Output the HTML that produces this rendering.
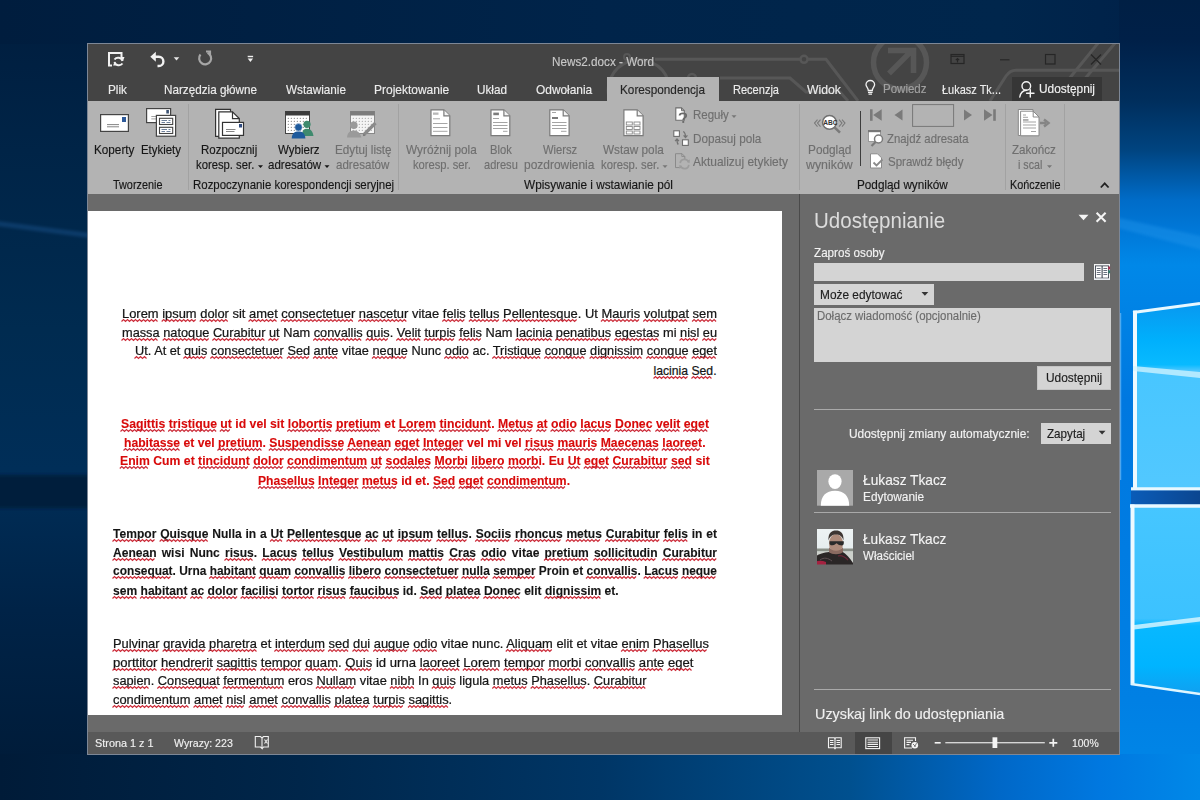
<!DOCTYPE html>
<html><head><meta charset="utf-8"><style>*{margin:0;padding:0;box-sizing:border-box}
html,body{width:1200px;height:800px;overflow:hidden;background:#0a3a78;font-family:"Liberation Sans",sans-serif}
.a{position:absolute}
.t{position:absolute;white-space:pre;line-height:1;transform-origin:0 0;font-family:"Liberation Sans",sans-serif}
#win{position:absolute;left:87px;top:43px;width:1033px;height:712px;background:#6a6a6a;border:1px solid #7d8796}
#title{position:absolute;left:88px;top:44px;width:1031px;height:57px;background:#444444;overflow:hidden}
#ribbon{position:absolute;left:88px;top:101px;width:1031px;height:93px;background:#b3b3b3}
#doc{position:absolute;left:88px;top:194px;width:711px;height:538px;background:#6a6a6a}
#page{position:absolute;left:88px;top:211px;width:694px;height:504px;background:#fff}
#pane{position:absolute;left:799px;top:194px;width:320px;height:538px;background:#6a6a6a;border-left:1px solid #4a4a4a}
#status{position:absolute;left:88px;top:732px;width:1031px;height:22px;background:#595959}
.sep{position:absolute;width:1px;background:#a0a0a0}
.dl{position:absolute;white-space:pre;line-height:1;transform-origin:0 0;font-family:"Liberation Sans",sans-serif;font-size:12px;color:#1a1a1a}
.u{}
</style></head><body>
<svg class="a" style="left:0;top:0" width="1200" height="800" viewBox="0 0 1200 800">
<defs>
<filter id="bl" x="-20%" y="-50%" width="140%" height="200%"><feGaussianBlur stdDeviation="1.6"/></filter>
<linearGradient id="leftG" x1="0" y1="0" x2="0" y2="800" gradientUnits="userSpaceOnUse">
<stop offset="0.0000" stop-color="#001d3e"/><stop offset="0.1875" stop-color="#002447"/><stop offset="0.4125" stop-color="#002b50"/>
<stop offset="0.5875" stop-color="#002e58"/><stop offset="0.7625" stop-color="#002347"/><stop offset="1.0000" stop-color="#001a36"/>
</linearGradient>
<linearGradient id="topG" x1="0" y1="0" x2="1200" y2="0" gradientUnits="userSpaceOnUse">
<stop offset="0.0000" stop-color="#001d3e"/><stop offset="0.5000" stop-color="#00244a"/><stop offset="0.8333" stop-color="#00264c"/><stop offset="1.0000" stop-color="#002048"/>
</linearGradient>
<linearGradient id="botG" x1="0" y1="0" x2="1200" y2="0" gradientUnits="userSpaceOnUse">
<stop offset="0.0000" stop-color="#001b38"/><stop offset="0.2500" stop-color="#00264a"/><stop offset="0.5000" stop-color="#003666"/><stop offset="0.7083" stop-color="#00508f"/>
<stop offset="0.8333" stop-color="#0068c8"/><stop offset="0.9167" stop-color="#0078e0"/><stop offset="1.0000" stop-color="#0088e8"/>
</linearGradient>
<linearGradient id="rightG" x1="0" y1="0" x2="0" y2="800" gradientUnits="userSpaceOnUse">
<stop offset="0.0000" stop-color="#001f44"/><stop offset="0.0500" stop-color="#002048"/><stop offset="0.1250" stop-color="#002e5c"/><stop offset="0.1875" stop-color="#004480"/>
<stop offset="0.2500" stop-color="#006cc8"/><stop offset="0.2875" stop-color="#0078d8"/><stop offset="0.3312" stop-color="#0088e8"/><stop offset="0.5000" stop-color="#0078e0"/>
<stop offset="0.8750" stop-color="#0080e4"/><stop offset="1.0000" stop-color="#0088e8"/>
</linearGradient>
<linearGradient id="pane1" x1="0" y1="303" x2="0" y2="490" gradientUnits="userSpaceOnUse">
<stop offset="0" stop-color="#0898f0"/><stop offset="0.2" stop-color="#00b0fc"/><stop offset="0.33" stop-color="#08baff"/><stop offset="0.36" stop-color="#48c6ff"/><stop offset="1" stop-color="#52c8ff"/>
</linearGradient>
<linearGradient id="pane2" x1="0" y1="505" x2="0" y2="694" gradientUnits="userSpaceOnUse">
<stop offset="0" stop-color="#46c6ff"/><stop offset="0.6" stop-color="#3cc2ff"/><stop offset="0.64" stop-color="#08b8ff"/><stop offset="0.85" stop-color="#00b4ff"/><stop offset="1" stop-color="#10a0f0"/>
</linearGradient>
<linearGradient id="gap" x1="0" y1="0" x2="1" y2="0"><stop offset="0" stop-color="#0a5cb8"/><stop offset="1" stop-color="#0a4690"/></linearGradient>
</defs>
<rect x="0" y="0" width="1200" height="800" fill="url(#leftG)"/>
<rect x="0" y="0" width="1200" height="44" fill="url(#topG)"/>
<rect x="0" y="754" width="1200" height="46" fill="url(#botG)"/>
<path d="M-10 220 L98 234 L98 239 L-10 225 Z" fill="#2a6ab0" opacity=".3" filter="url(#bl)"/>
<rect x="-10" y="475" width="108" height="33" fill="#001a38" opacity=".85" filter="url(#bl)"/>
<rect x="1119" y="0" width="81" height="754" fill="url(#rightG)"/>
<path d="M1110 216 L1210 238 V252 L1110 226 Z" fill="#2a9cf0" opacity=".35" filter="url(#bl)"/>
<path d="M1133 312 L1200 303 V489 H1133 Z" fill="url(#pane1)"/>
<path d="M1133 312.5 L1200 303.5" stroke="#e8f8ff" stroke-width="3"/><path d="M1120.7 313 V480" stroke="#bfe6ff" stroke-width="1" opacity=".5"/>
<path d="M1135 310.5 V490" stroke="#eefaff" stroke-width="4"/>
<path d="M1131 489 H1200" stroke="#e8f8ff" stroke-width="3.5"/>
<rect x="1131" y="490.5" width="69" height="14" fill="url(#gap)"/>
<path d="M1131 505 H1200 V694 L1131 684 Z" fill="url(#pane2)"/>
<path d="M1130 506 H1200" stroke="#e8f8ff" stroke-width="3.5"/>
<path d="M1132.5 504.5 V685" stroke="#eefaff" stroke-width="4"/>
<path d="M1131 684 L1200 694" stroke="#e0f6ff" stroke-width="2.5"/>
<path d="M1133 366 L1200 372 V378 L1133 371 Z" fill="#d4f4ff" opacity=".75"/>
<path d="M1134 625 L1200 617 V621.5 L1134 629.5 Z" fill="#e0f8ff" opacity=".8"/>
</svg>
<div id="win"></div><div id="title"></div>
<svg class="a" style="left:88px;top:44px" width="1031" height="57" viewBox="88 44 1031 57">
<g fill="none" stroke="#575757" stroke-width="3">
<path d="M655 59.3 H800.5 M807.5 59.3 H826 L858 101"/>
<circle cx="804" cy="59.3" r="3.5" stroke-width="2.5"/>
<path d="M610 101 A24 24 0 0 1 668 80" stroke-width="3"/>
<path d="M720 78 H790 L806 92 H840 L848 101" stroke-width="3"/>
<circle cx="900" cy="62.5" r="26.5" stroke-width="5.5"/>
<path d="M889 73.5 L911 51.5 M888 50.5 H913.5 V73" stroke-width="5.5"/>
<path d="M1120 70.2 H1016 Q1010 70.2 1006 76 L990 101"/>
<path d="M1060 90 L1099 42 M1072 94 L1116 42" stroke-width="3"/>
<circle cx="627" cy="57" r="3" stroke-width="2"/>
<circle cx="692" cy="78" r="4" stroke-width="2.5"/>
</g>
</svg>
<div class="a" style="left:607px;top:77px;width:112px;height:24px;background:#b3b3b3"></div>
<div class="a" style="left:1012px;top:77px;width:90px;height:24px;background:#363636"></div>
<svg class="a" style="left:100px;top:46px" width="160" height="26" viewBox="100 46 160 26">
<g fill="none" stroke="#f2f2f2" stroke-width="2">
<path d="M112 65.5 H109 V53 H121.5 V58"/>
<path d="M114.5 59.5 A4.6 4.6 0 0 1 122.5 61 M122.5 63.5 A4.6 4.6 0 0 1 114.5 62"/>
</g>
<path d="M121 57 L124.5 57 L123 61 Z" fill="#f2f2f2"/>
<path d="M113 61.5 L116.5 61.5 L115 65.5 Z" fill="#f2f2f2" transform="rotate(180 114.8 63.5)"/>
<path d="M153.5 56.8 H158.8 A4.6 4.6 0 0 1 158.8 66 H157.5" fill="none" stroke="#f2f2f2" stroke-width="2.4"/>
<path d="M150.3 56.8 L155.8 51.8 V61.8 Z" fill="#f2f2f2"/>
<path d="M173.7 57.2 H179.3 L176.5 60.4 Z" fill="#e6e6e6"/>
<g fill="none" stroke="#a6a6a6" stroke-width="2.2">
<path d="M207.5 52.8 A6 6 0 1 1 200.5 54.5"/>
<path d="M206 51.5 H210 V55.5"/>
</g>
<rect x="247.7" y="55.8" width="5.4" height="1.4" fill="#f0f0f0"/>
<path d="M247.7 58.6 H253.1 L250.4 62 Z" fill="#f0f0f0"/>
</svg>
<svg class="a" style="left:940px;top:44px" width="180" height="32" viewBox="940 44 180 32">
<g fill="none" stroke="#262626" stroke-width="1.2">
<rect x="951" y="54.5" width="13" height="9"/>
<path d="M951 56.3 H964"/>
<path d="M957.5 62.5 V58.5 M955.8 60.2 L957.5 58.5 L959.2 60.2"/>
<path d="M1000 59.8 H1009.5"/>
<rect x="1045.5" y="54.5" width="9.5" height="9.5"/>
<path d="M1091 54.5 L1101 64.5 M1101 54.5 L1091 64.5"/>
</g>
</svg>
<svg class="a" style="left:860px;top:76px" width="250" height="25" viewBox="860 76 250 25">
<g fill="none" stroke="#f0f0f0" stroke-width="1.3">
<path d="M868.3 90.5 C868.3 88 866 86.5 866 84.8 A4.3 4.3 0 0 1 874.6 84.8 C874.6 86.5 872.3 88 872.3 90.5 Z"/>
<path d="M868 92.3 H872.6 M868.5 94.2 H872"/>
</g>
<g fill="none" stroke="#f4f4f4" stroke-width="1.4" stroke-linecap="round">
<circle cx="1026.3" cy="86" r="4.3"/>
<path d="M1019.8 97 C1020.5 93 1023 90.5 1026.5 90.3"/>
<path d="M1030.3 89.6 V97 M1026.6 93.3 H1034"/>
</g>
</svg>
<div id="ribbon"></div>
<div class="sep" style="left:188.0px;top:104px;height:86px;background:#a2a2a2"></div>
<div class="sep" style="left:398.0px;top:104px;height:86px;background:#a2a2a2"></div>
<div class="sep" style="left:798.5px;top:104px;height:86px;background:#a2a2a2"></div>
<div class="sep" style="left:1005.0px;top:104px;height:86px;background:#a2a2a2"></div>
<div class="sep" style="left:1064.0px;top:104px;height:86px;background:#a2a2a2"></div>
<div class="a" style="left:860px;top:111px;width:1px;height:55px;background:#3c3c3c"></div>
<svg class="a" style="left:88px;top:101px" width="1031" height="93" viewBox="88 101 1031 93"><rect x="100.6" y="114.6" width="27.8" height="16.8" fill="#fff" stroke="#444" stroke-width="1.2"/><rect x="122" y="117" width="4" height="5" fill="#2e5a9a"/><path d="M107 124.6 H119 M107 126.8 H119" stroke="#777" stroke-width="0.9"/><rect x="146.6" y="108.6" width="24" height="14" fill="#fff" stroke="#444" stroke-width="1.2"/><rect x="166.3" y="110" width="2.6" height="3.5" fill="#3a5070"/><path d="M151.3 116.5 H156.5 M151.3 118.9 H156.5" stroke="#8a8a8a" stroke-width="0.8"/><rect x="156.4" y="115.4" width="19.2" height="20.8" fill="#fff" stroke="#444" stroke-width="1.2"/><rect x="159.5" y="118.3" width="13.2" height="6.2" fill="#fff" stroke="#444" stroke-width="1.1"/><rect x="159.5" y="127.3" width="13.2" height="6.2" fill="#fff" stroke="#444" stroke-width="1.1"/><path d="M161.5 120.5 H167 M168.5 120.5 H170.5 M161.5 122.5 H165 M166.5 122.5 H170.5 M161.5 129.5 H167 M168.5 129.5 H170.5 M161.5 131.5 H165 M166.5 131.5 H170.5" stroke="#4a6080" stroke-width="0.8"/><path d="M215.6 109.4 H230.5 V136.4 H215.6 Z" fill="#fff" stroke="#333" stroke-width="1.2"/><path d="M218.8 111.8 H232.5 L239.3 118.6 V138.2 H218.8 Z" fill="#fff" stroke="#333" stroke-width="1.2"/><path d="M232.5 111.8 V118.6 H239.3" fill="none" stroke="#333" stroke-width="1.2"/><rect x="222.5" y="122.4" width="21" height="13" fill="#fff" stroke="#333" stroke-width="1.2"/><rect x="239" y="124" width="3" height="3.5" fill="#2e4a80"/><path d="M226 129.5 H235.5 M226 131.5 H234.5" stroke="#666" stroke-width="0.8"/><rect x="285.5" y="111.5" width="24" height="22" fill="#fff" stroke="#444" stroke-width="1"/><rect x="285.2" y="111.2" width="24.6" height="4.3" fill="#3c3c3c"/><circle cx="288.3" cy="118.3" r="0.55" fill="#555"/><circle cx="288.3" cy="121.3" r="0.55" fill="#555"/><circle cx="288.3" cy="124.3" r="0.55" fill="#555"/><circle cx="288.3" cy="127.3" r="0.55" fill="#555"/><circle cx="288.3" cy="130.3" r="0.55" fill="#555"/><circle cx="291.3" cy="118.3" r="0.55" fill="#555"/><circle cx="291.3" cy="121.3" r="0.55" fill="#555"/><circle cx="291.3" cy="124.3" r="0.55" fill="#555"/><circle cx="291.3" cy="127.3" r="0.55" fill="#555"/><circle cx="291.3" cy="130.3" r="0.55" fill="#555"/><circle cx="294.3" cy="118.3" r="0.55" fill="#555"/><circle cx="294.3" cy="121.3" r="0.55" fill="#555"/><circle cx="294.3" cy="124.3" r="0.55" fill="#555"/><circle cx="294.3" cy="127.3" r="0.55" fill="#555"/><circle cx="294.3" cy="130.3" r="0.55" fill="#555"/><circle cx="297.3" cy="118.3" r="0.55" fill="#555"/><circle cx="297.3" cy="121.3" r="0.55" fill="#555"/><circle cx="297.3" cy="124.3" r="0.55" fill="#555"/><circle cx="297.3" cy="127.3" r="0.55" fill="#555"/><circle cx="297.3" cy="130.3" r="0.55" fill="#555"/><circle cx="300.3" cy="118.3" r="0.55" fill="#555"/><circle cx="300.3" cy="121.3" r="0.55" fill="#555"/><circle cx="300.3" cy="124.3" r="0.55" fill="#555"/><circle cx="300.3" cy="127.3" r="0.55" fill="#555"/><circle cx="300.3" cy="130.3" r="0.55" fill="#555"/><circle cx="303.3" cy="118.3" r="0.55" fill="#555"/><circle cx="303.3" cy="121.3" r="0.55" fill="#555"/><circle cx="303.3" cy="124.3" r="0.55" fill="#555"/><circle cx="303.3" cy="127.3" r="0.55" fill="#555"/><circle cx="303.3" cy="130.3" r="0.55" fill="#555"/><circle cx="306.3" cy="118.3" r="0.55" fill="#555"/><circle cx="306.3" cy="121.3" r="0.55" fill="#555"/><circle cx="306.3" cy="124.3" r="0.55" fill="#555"/><circle cx="306.3" cy="127.3" r="0.55" fill="#555"/><circle cx="306.3" cy="130.3" r="0.55" fill="#555"/><circle cx="307" cy="124.3" r="3.6" fill="#3f8a6e"/><path d="M301.8 136 C302 130.5 304 128.8 307 128.8 C310 128.8 312.5 130.5 313.5 136 Z" fill="#3f8a6e"/><circle cx="298.5" cy="127.3" r="3.7" fill="#1e5a9c" stroke="#b7c7dd" stroke-width=".6"/><path d="M291.7 138.4 C292 133.5 294.5 131.6 298.5 131.6 C302.5 131.6 305 133.5 305.4 138.4 Z" fill="#1e5a9c"/><rect x="350.5" y="111.5" width="24" height="22" fill="#f4f4f4" stroke="#888" stroke-width="1"/><rect x="350.3" y="111.2" width="24.4" height="4.3" fill="#7c7c7c"/><circle cx="353.3" cy="118.3" r="0.55" fill="#8a8a8a"/><circle cx="353.3" cy="121.3" r="0.55" fill="#8a8a8a"/><circle cx="353.3" cy="124.3" r="0.55" fill="#8a8a8a"/><circle cx="353.3" cy="127.3" r="0.55" fill="#8a8a8a"/><circle cx="353.3" cy="130.3" r="0.55" fill="#8a8a8a"/><circle cx="356.3" cy="118.3" r="0.55" fill="#8a8a8a"/><circle cx="356.3" cy="121.3" r="0.55" fill="#8a8a8a"/><circle cx="356.3" cy="124.3" r="0.55" fill="#8a8a8a"/><circle cx="356.3" cy="127.3" r="0.55" fill="#8a8a8a"/><circle cx="356.3" cy="130.3" r="0.55" fill="#8a8a8a"/><circle cx="359.3" cy="118.3" r="0.55" fill="#8a8a8a"/><circle cx="359.3" cy="121.3" r="0.55" fill="#8a8a8a"/><circle cx="359.3" cy="124.3" r="0.55" fill="#8a8a8a"/><circle cx="359.3" cy="127.3" r="0.55" fill="#8a8a8a"/><circle cx="359.3" cy="130.3" r="0.55" fill="#8a8a8a"/><circle cx="362.3" cy="118.3" r="0.55" fill="#8a8a8a"/><circle cx="362.3" cy="121.3" r="0.55" fill="#8a8a8a"/><circle cx="362.3" cy="124.3" r="0.55" fill="#8a8a8a"/><circle cx="362.3" cy="127.3" r="0.55" fill="#8a8a8a"/><circle cx="362.3" cy="130.3" r="0.55" fill="#8a8a8a"/><circle cx="365.3" cy="118.3" r="0.55" fill="#8a8a8a"/><circle cx="365.3" cy="121.3" r="0.55" fill="#8a8a8a"/><circle cx="365.3" cy="124.3" r="0.55" fill="#8a8a8a"/><circle cx="365.3" cy="127.3" r="0.55" fill="#8a8a8a"/><circle cx="365.3" cy="130.3" r="0.55" fill="#8a8a8a"/><circle cx="368.3" cy="118.3" r="0.55" fill="#8a8a8a"/><circle cx="368.3" cy="121.3" r="0.55" fill="#8a8a8a"/><circle cx="368.3" cy="124.3" r="0.55" fill="#8a8a8a"/><circle cx="368.3" cy="127.3" r="0.55" fill="#8a8a8a"/><circle cx="368.3" cy="130.3" r="0.55" fill="#8a8a8a"/><circle cx="371.3" cy="118.3" r="0.55" fill="#8a8a8a"/><circle cx="371.3" cy="121.3" r="0.55" fill="#8a8a8a"/><circle cx="371.3" cy="124.3" r="0.55" fill="#8a8a8a"/><circle cx="371.3" cy="127.3" r="0.55" fill="#8a8a8a"/><circle cx="371.3" cy="130.3" r="0.55" fill="#8a8a8a"/><circle cx="353.8" cy="125.3" r="3.8" fill="#9a9a9a"/><path d="M347 137.6 C347.3 132.5 350 130.4 353.8 130.4 C357.6 130.4 360.4 132.5 361.4 137.6 Z" fill="#9a9a9a"/><path d="M363.5 135 L375.5 123" stroke="#8a8a8a" stroke-width="3.2"/><path d="M362.8 136.2 L363.6 133.6 L365.4 135.4 Z" fill="#7a7a7a"/><path d="M431.0 109.89999999999999 H443.9 L449.79999999999995 115.8 V135.70000000000002 H431.0 Z" fill="#fff" stroke="#7a7a7a" stroke-width="1.2"/><path d="M443.9 109.89999999999999 V115.8 H449.79999999999995" fill="#f4f4f4" stroke="#7a7a7a" stroke-width="1.2"/><rect x="433" y="112.5" width="5.5" height="2.3" fill="#b8b8b8"/><path d="M433 118.8 H440 M433 123.5 H447.5 M433 127.5 H447.5 M433 131.3 H447.5" stroke="#9c9c9c" stroke-width=".9"/><path d="M491.0 109.89999999999999 H503.9 L509.79999999999995 115.8 V135.70000000000002 H491.0 Z" fill="#fff" stroke="#7a7a7a" stroke-width="1.2"/><path d="M503.9 109.89999999999999 V115.8 H509.79999999999995" fill="#f4f4f4" stroke="#7a7a7a" stroke-width="1.2"/><rect x="493.3" y="112.6" width="5.6" height="2.6" fill="#7c7c7c"/><path d="M493 118.5 H499 M493 122.5 H507.5 M493 125.5 H507.5 M493 128.5 H507.5 M503 131.3 H507.5" stroke="#9a9a9a" stroke-width=".9"/><path d="M549.8000000000001 109.89999999999999 H563.2 L569.1 115.8 V135.70000000000002 H549.8000000000001 Z" fill="#fff" stroke="#7a7a7a" stroke-width="1.2"/><path d="M563.2 109.89999999999999 V115.8 H569.1" fill="#f4f4f4" stroke="#7a7a7a" stroke-width="1.2"/><path d="M552 112.5 H556 M552 125.5 H566.5 M552 128.5 H566.5 M552 122.5 H566.5 M561 131.3 H566.5" stroke="#9a9a9a" stroke-width=".9"/><rect x="552" y="117" width="6" height="2" fill="#7c7c7c"/><path d="M623.9 109.89999999999999 H637.2 L643.1 115.8 V135.70000000000002 H623.9 Z" fill="#fff" stroke="#7a7a7a" stroke-width="1.2"/><path d="M637.2 109.89999999999999 V115.8 H643.1" fill="#f4f4f4" stroke="#7a7a7a" stroke-width="1.2"/><g fill="none" stroke="#888" stroke-width=".9"><rect x="626.3" y="122" width="6" height="3"/><rect x="634" y="122" width="6" height="3"/><rect x="626.3" y="126.5" width="6" height="3"/><rect x="634" y="126.5" width="6" height="3"/><rect x="626.3" y="131" width="6" height="3"/><rect x="634" y="131" width="6" height="3"/></g><path d="M675.8 107.9 H681.5 L684.3 110.7 V120.3 H675.8 Z" fill="#fff" stroke="#6e6e6e" stroke-width="1.1"/><path d="M681.5 107.9 V110.7 H684.3" fill="none" stroke="#6e6e6e" stroke-width="1"/><path d="M679.6 115.6 C679.6 112.8 686.2 112.6 686.2 115.8 C686.2 117.8 683.2 117.8 683.2 120" fill="none" stroke="#6a6a6a" stroke-width="1.8"/><rect x="682.3" y="121" width="1.9" height="1.9" fill="#6a6a6a"/><rect x="673.8" y="130.8" width="5.6" height="5.6" fill="#fff" stroke="#6e6e6e" stroke-width="1.1"/><rect x="682.5" y="139.8" width="5.8" height="5.6" fill="#fff" stroke="#6e6e6e" stroke-width="1.1"/><path d="M683.2 131.5 C685.5 132.5 685.5 135 685.5 137.3 M683.6 135.4 L685.5 137.6 L687.4 135.4 M678.3 144.6 C677 143.5 677 141.5 677 139.3 M675.1 141.2 L677 139 L678.9 141.2" fill="none" stroke="#737373" stroke-width="1.3"/><path d="M681 167.6 H675.5 V153.7 H682 L684.8 156.5 V159" fill="none" stroke="#8a8a8a" stroke-width="1"/><path d="M681.8 153.7 V156.5 H684.8" fill="none" stroke="#8a8a8a" stroke-width=".9"/><path d="M680.2 163.2 A4.3 4.3 0 0 1 688.6 162.4 M688.8 164.8 A4.3 4.3 0 0 1 680.4 165.6" fill="none" stroke="#9c9c9c" stroke-width="1.7"/><path d="M686.8 160.8 L689.4 163.2 L690 159.6 Z M682.2 167.2 L679.6 164.8 L679 168.4 Z" fill="#9c9c9c"/><g transform="translate(0 -1.4)"><g fill="none" stroke="#7a7a7a" stroke-width="1.1"><path d="M817.5 121 L814.5 124.5 L817.5 128 M820.5 121 L817.5 124.5 L820.5 128 M842 121 L845 124.5 L842 128 M839 121 L842 124.5 L839 128"/></g><circle cx="829.5" cy="123.8" r="6.9" fill="#fff" stroke="#707070" stroke-width="1.6"/><path d="M834.5 128.8 L840 134" stroke="#7a7a7a" stroke-width="2.6"/><text x="823.2" y="126.3" font-family="Liberation Sans" font-weight="700" font-size="6.6" fill="#333" style="-webkit-font-smoothing:grayscale">ABC</text></g><g fill="#7a7a7a"><rect x="870" y="109.3" width="2.6" height="11.5"/><path d="M881.7 109.3 V120.8 L873.2 115 Z"/><path d="M902.5 109.5 V120.5 L894.5 115 Z"/><path d="M964 109.5 V120.5 L972 115 Z"/><path d="M984 109.3 V120.8 L992.5 115 Z"/><rect x="993.2" y="109.3" width="2.6" height="11.5"/></g><rect x="912.6" y="104.6" width="41" height="21.8" fill="none" stroke="#777" stroke-width="1"/><rect x="868.5" y="130.5" width="12" height="11" fill="#fff" stroke="#999" stroke-width="1"/><rect x="868" y="130" width="13" height="2.2" fill="#777"/><circle cx="878.5" cy="139" r="4" fill="#fff" stroke="#7a7a7a" stroke-width="1.5"/><path d="M875.6 142 L871.5 146" stroke="#7a7a7a" stroke-width="2.2"/><path d="M870.5 153.8 H877.5 L881.5 157.8 V168 H870.5 Z" fill="#fff" stroke="#8a8a8a" stroke-width="1"/><path d="M873.5 162.5 L876.5 165.5 L882.5 159.5" fill="none" stroke="#8a8a8a" stroke-width="1.8"/><path d="M1018.3 109.5 H1033 V135.5 H1018.3 Z" fill="#fff" stroke="#888" stroke-width="1"/><path d="M1020.6 111.2 H1033.2 L1039 117 V135.8 H1020.6 Z" fill="#fff" stroke="#888" stroke-width="1"/><path d="M1033.2 111.2 V117 H1039" fill="none" stroke="#888" stroke-width="1"/><path d="M1023 115 H1026 M1023 117.3 H1028 M1023 122 H1036 M1023 125 H1036 M1023 128 H1036 M1031 131.5 H1036" stroke="#999" stroke-width=".9"/><rect x="1023" y="119.2" width="5.5" height="1.5" fill="#999"/><path d="M1040 123 H1046 M1044 119.5 L1048.5 123 L1044 126.5" fill="none" stroke="#858585" stroke-width="2.4"/><path d="M258 165.2 H263 L260.5 167.89999999999998 Z" fill="#161616"/><path d="M324.5 165.2 H329.5 L327.0 167.89999999999998 Z" fill="#161616"/><path d="M662.5 165.2 H667.5 L665.0 167.89999999999998 Z" fill="#777"/><path d="M731.5 115.2 H736.5 L734.0 117.9 Z" fill="#777"/><path d="M1047 165.2 H1052 L1049.5 167.89999999999998 Z" fill="#777"/><path d="M1100.8 187.5 L1104.7 183.3 L1108.6 187.5" fill="none" stroke="#222" stroke-width="1.8"/></svg>
<div id="doc"></div><div id="page"></div>
<div id="pane"></div>
<div class="a" style="left:814px;top:263px;width:270px;height:18px;background:#d4d4d4"></div>
<div class="a" style="left:814px;top:284px;width:120px;height:20.5px;background:#d4d4d4"></div>
<div class="a" style="left:814px;top:307.5px;width:297px;height:54.5px;background:#d4d4d4"></div>
<div class="a" style="left:1036.5px;top:365.5px;width:74px;height:24px;background:#d4d4d4;border:1px solid #c4c4c4"></div>
<div class="a" style="left:814px;top:409.0px;width:297px;height:1px;background:#a9a9a9"></div>
<div class="a" style="left:814px;top:511.70000000000005px;width:297px;height:1px;background:#a9a9a9"></div>
<div class="a" style="left:814px;top:688.8px;width:297px;height:1px;background:#a9a9a9"></div>
<div class="a" style="left:1041px;top:423px;width:70px;height:21px;background:#d4d4d4"></div>
<svg class="a" style="left:799px;top:194px" width="320" height="538" viewBox="799 194 320 538"><path d="M1078.5 214.8 H1088.5 L1083.5 220.2 Z" fill="#f4f4f4"/><path d="M1096.6 212.8 L1105.6 221.8 M1105.6 212.8 L1096.6 221.8" stroke="#f4f4f4" stroke-width="2.1"/><rect x="1094" y="264" width="16" height="16" fill="#f4f4f4"/><rect x="1095" y="265.5" width="14" height="13" fill="#2c3440"/><rect x="1095.8" y="266.3" width="5.8" height="11.4" fill="#fff"/><rect x="1102.6" y="266.3" width="5.6" height="11.4" fill="#fff"/><path d="M1096.8 268.5 H1100.6 M1103.4 268.5 H1107.2" stroke="#5a6270" stroke-width=".9"/><path d="M1096.8 270.5 H1100.6 M1103.4 270.5 H1107.2" stroke="#5a6270" stroke-width=".9"/><path d="M1096.8 272.5 H1100.6 M1103.4 272.5 H1107.2" stroke="#5a6270" stroke-width=".9"/><path d="M1096.8 274.5 H1100.6 M1103.4 274.5 H1107.2" stroke="#5a6270" stroke-width=".9"/><rect x="1108.3" y="266.5" width="1.8" height="3" fill="#b03050"/><rect x="1108.3" y="270.3" width="1.8" height="3" fill="#2a7a6a"/><rect x="1094" y="278.5" width="16" height="1.5" fill="#e8ecf0"/><path d="M921.5 292 H928.3 L924.9 295.8 Z" fill="#333"/><path d="M1098.7 430.7 H1105.5 L1102.1 434.5 Z" fill="#333"/><rect x="817" y="470" width="36" height="35.7" fill="#a9a9a9"/><ellipse cx="835" cy="481.6" rx="6.6" ry="7.4" fill="#fff"/><path d="M820.8 505.7 C820.8 496 826 490.8 835 490.8 C844 490.8 849.2 496 849.2 505.7 Z" fill="#fff"/><defs><linearGradient id="sky" x1="0" y1="0" x2="0" y2="1"><stop offset="0" stop-color="#eef3f4"/><stop offset="1" stop-color="#dfe8ea"/></linearGradient>
<filter id="pb" x="-5%" y="-5%" width="110%" height="110%"><feGaussianBlur stdDeviation=".55"/></filter>
<clipPath id="avc"><rect x="817" y="529" width="36" height="35.5"/></clipPath></defs>
<g clip-path="url(#avc)"><g filter="url(#pb)">
<rect x="815" y="527" width="40" height="40" fill="url(#sky)"/>
<rect x="815" y="548.5" width="40" height="3" fill="#8a9088"/>
<rect x="815" y="551.5" width="40" height="15" fill="#cdd1cc"/>
<path d="M815 566 V557 C819 553.5 824 552.5 829 552 C833 554 838 554 842 551.5 C846 553.5 850 558 853 563 V566 Z" fill="#2c2527"/>
<path d="M820 560 C824 557 828 558 832 561" stroke="#5a4e50" stroke-width="1" fill="none"/>
<path d="M815 561.5 C818.5 560.5 822.5 560.5 826 562 V566 H815 Z" fill="#a42040"/>
<path d="M838 556 C841 555 845 557 848 560" stroke="#6a2838" stroke-width="1.2" fill="none"/>
<ellipse cx="836" cy="543.5" rx="7" ry="9.6" fill="#ad8a7a"/>
<path d="M829 547 C831 552 841 552 843 547 V552 C840 555 832 555 829 552 Z" fill="#8a6a60"/>
<path d="M828.5 540.5 C828 533 831.5 530.5 836 530.5 C840.5 530.5 844 533 843.5 540.5 C842 535.5 839 534.5 836 534.5 C833 534.5 830 535.5 828.5 540.5 Z" fill="#3d3532"/>
<path d="M829.5 541.3 H843.8 V543.3 C843.8 545.3 842 545.6 840.5 545.3 C838.5 545 837.5 544 836.6 543.3 C835.6 544 834.5 545 832.5 545.3 C831 545.5 829.5 545 829.5 543.3 Z" fill="#2a2a2a"/>
</g></g></svg>
<div id="status"></div>
<div class="a" style="left:854.7px;top:732px;width:37.3px;height:22px;background:#454545"></div>
<svg class="a" style="left:88px;top:732px" width="1031" height="22" viewBox="88 732 1031 22"><g fill="none" stroke="#f0f0f0" stroke-width="1.1"><path d="M255.3 736.5 H260.5 L262 738 V748.5 L260.5 747 H255.3 Z"/><path d="M262 738 L263.5 736.5 H268.3 V747 H263.5 L262 748.5"/><path d="M264.5 739.5 L267.5 743.5 M267.5 739.5 L264.5 743.5"/></g><g fill="none" stroke="#f4f4f4" stroke-width="1.1"><path d="M828.5 737.8 H834.3 L835 738.5 L835.7 737.8 H841.2 V747.8 H835.7 L835 748.8 L834.3 747.8 H828.5 Z"/><path d="M835 738.5 V748.5 M830 740.5 H833.5 M830 742.5 H833.5 M830 744.5 H833.5 M836.5 740.5 H840 M836.5 742.5 H840 M836.5 744.5 H840"/></g><g fill="none" stroke="#f4f4f4" stroke-width="1.1"><rect x="865.8" y="737.8" width="13.8" height="10.8"/><path d="M867.5 740 H878 M867.5 742.2 H878 M867.5 744.4 H878 M867.5 746.5 H878"/></g><g fill="none" stroke="#f4f4f4" stroke-width="1.1"><path d="M912 748 H904.6 V737.8 H915.5 V741"/><path d="M906.5 740.2 H913 M906.5 742.4 H911 M906.5 744.6 H909.5"/></g><circle cx="914.8" cy="745.3" r="3.3" fill="#f4f4f4"/><path d="M913 744 L915.5 746.5 M916.5 743.2 L914.5 747" stroke="#595959" stroke-width=".8"/><rect x="934.7" y="742" width="6" height="1.6" fill="#f4f4f4"/><rect x="945.3" y="742.2" width="99.5" height="1.1" fill="#f4f4f4"/><rect x="992.5" y="737.3" width="4.8" height="10.7" fill="#f4f4f4"/><path d="M1049.3 742.8 H1057.3 M1053.3 738.8 V746.8" stroke="#f4f4f4" stroke-width="1.7"/></svg>
<div class="t " style="left:551.50px;top:56.00px;color:#c8c8c8;font-size:12.4px;font-weight:400;-webkit-text-stroke:0.15px #c8c8c8;;transform:scaleX(0.9454);">News2.docx - Word</div>
<div class="t " style="left:108.00px;top:83.50px;color:#ececec;font-size:12.4px;font-weight:400;-webkit-text-stroke:0.15px #ececec;;transform:scaleX(0.9515);">Plik</div>
<div class="t " style="left:164.00px;top:83.50px;color:#ececec;font-size:12.4px;font-weight:400;-webkit-text-stroke:0.15px #ececec;;transform:scaleX(0.9442);">Narzędzia główne</div>
<div class="t " style="left:285.50px;top:83.50px;color:#ececec;font-size:12.4px;font-weight:400;-webkit-text-stroke:0.15px #ececec;;transform:scaleX(0.9470);">Wstawianie</div>
<div class="t " style="left:373.75px;top:83.50px;color:#ececec;font-size:12.4px;font-weight:400;-webkit-text-stroke:0.15px #ececec;;transform:scaleX(0.9667);">Projektowanie</div>
<div class="t " style="left:476.75px;top:83.50px;color:#ececec;font-size:12.4px;font-weight:400;-webkit-text-stroke:0.15px #ececec;;transform:scaleX(0.9467);">Układ</div>
<div class="t " style="left:535.50px;top:83.50px;color:#ececec;font-size:12.4px;font-weight:400;-webkit-text-stroke:0.15px #ececec;;transform:scaleX(0.9605);">Odwołania</div>
<div class="t " style="left:733.00px;top:83.50px;color:#ececec;font-size:12.4px;font-weight:400;-webkit-text-stroke:0.15px #ececec;;transform:scaleX(0.8905);">Recenzja</div>
<div class="t " style="left:807.00px;top:83.50px;color:#ececec;font-size:12.4px;font-weight:400;-webkit-text-stroke:0.15px #ececec;;transform:scaleX(0.9873);">Widok</div>
<div class="t " style="left:942.00px;top:83.50px;color:#ececec;font-size:12.4px;font-weight:400;-webkit-text-stroke:0.15px #ececec;;transform:scaleX(0.8862);">Łukasz Tk...</div>
<div class="t " style="left:620.00px;top:83.50px;color:#262626;font-size:12.4px;font-weight:400;-webkit-text-stroke:0.15px #262626;;transform:scaleX(0.9491);">Korespondencja</div>
<div class="t " style="left:882.50px;top:83.00px;color:#a0a0a0;font-size:12.4px;font-weight:400;-webkit-text-stroke:0.15px #a0a0a0;;transform:scaleX(0.9286);">Powiedz</div>
<div class="t " style="left:1039.00px;top:83.00px;color:#f0f0f0;font-size:12.4px;font-weight:400;-webkit-text-stroke:0.15px #f0f0f0;;transform:scaleX(0.9562);">Udostępnij</div>
<div class="t " style="left:94.30px;top:143.70px;color:#161616;font-size:12.4px;font-weight:400;-webkit-text-stroke:0.15px #161616;;transform:scaleX(0.9461);">Koperty</div>
<div class="t " style="left:140.50px;top:143.70px;color:#161616;font-size:12.4px;font-weight:400;-webkit-text-stroke:0.15px #161616;;transform:scaleX(0.9219);">Etykiety</div>
<div class="t " style="left:200.50px;top:143.70px;color:#161616;font-size:12.4px;font-weight:400;-webkit-text-stroke:0.15px #161616;;transform:scaleX(0.9272);">Rozpocznij</div>
<div class="t " style="left:195.50px;top:159.40px;color:#161616;font-size:12.4px;font-weight:400;-webkit-text-stroke:0.15px #161616;;transform:scaleX(0.9103);">koresp. ser.</div>
<div class="t " style="left:277.50px;top:143.70px;color:#161616;font-size:12.4px;font-weight:400;-webkit-text-stroke:0.15px #161616;;transform:scaleX(0.9296);">Wybierz</div>
<div class="t " style="left:267.50px;top:159.40px;color:#161616;font-size:12.4px;font-weight:400;-webkit-text-stroke:0.15px #161616;;transform:scaleX(0.9305);">adresatów</div>
<div class="t " style="left:334.70px;top:143.70px;color:#6f6f6f;font-size:12.4px;font-weight:400;-webkit-text-stroke:0.15px #6f6f6f;;transform:scaleX(0.9446);">Edytuj listę</div>
<div class="t " style="left:336.30px;top:159.40px;color:#6f6f6f;font-size:12.4px;font-weight:400;-webkit-text-stroke:0.15px #6f6f6f;;transform:scaleX(0.9340);">adresatów</div>
<div class="t " style="left:405.50px;top:143.70px;color:#6f6f6f;font-size:12.4px;font-weight:400;-webkit-text-stroke:0.15px #6f6f6f;;transform:scaleX(0.9533);">Wyróżnij pola</div>
<div class="t " style="left:412.70px;top:159.40px;color:#6f6f6f;font-size:12.4px;font-weight:400;-webkit-text-stroke:0.15px #6f6f6f;;transform:scaleX(0.9025);">koresp. ser.</div>
<div class="t " style="left:489.50px;top:143.70px;color:#6f6f6f;font-size:12.4px;font-weight:400;-webkit-text-stroke:0.15px #6f6f6f;;transform:scaleX(0.9042);">Blok</div>
<div class="t " style="left:483.70px;top:159.40px;color:#6f6f6f;font-size:12.4px;font-weight:400;-webkit-text-stroke:0.15px #6f6f6f;;transform:scaleX(0.8920);">adresu</div>
<div class="t " style="left:543.00px;top:143.70px;color:#6f6f6f;font-size:12.4px;font-weight:400;-webkit-text-stroke:0.15px #6f6f6f;;transform:scaleX(0.9033);">Wiersz</div>
<div class="t " style="left:524.30px;top:159.40px;color:#6f6f6f;font-size:12.4px;font-weight:400;-webkit-text-stroke:0.15px #6f6f6f;;transform:scaleX(0.9642);">pozdrowienia</div>
<div class="t " style="left:603.00px;top:143.70px;color:#6f6f6f;font-size:12.4px;font-weight:400;-webkit-text-stroke:0.15px #6f6f6f;;transform:scaleX(0.9493);">Wstaw pola</div>
<div class="t " style="left:600.50px;top:159.40px;color:#6f6f6f;font-size:12.4px;font-weight:400;-webkit-text-stroke:0.15px #6f6f6f;;transform:scaleX(0.9103);">koresp. ser.</div>
<div class="t " style="left:692.50px;top:109.20px;color:#6f6f6f;font-size:12.4px;font-weight:400;-webkit-text-stroke:0.15px #6f6f6f;;transform:scaleX(0.9280);">Reguły</div>
<div class="t " style="left:692.50px;top:132.50px;color:#6f6f6f;font-size:12.4px;font-weight:400;-webkit-text-stroke:0.15px #6f6f6f;;transform:scaleX(0.9441);">Dopasuj pola</div>
<div class="t " style="left:692.50px;top:155.80px;color:#6f6f6f;font-size:12.4px;font-weight:400;-webkit-text-stroke:0.15px #6f6f6f;;transform:scaleX(0.9646);">Aktualizuj etykiety</div>
<div class="t " style="left:808.30px;top:143.70px;color:#6f6f6f;font-size:12.4px;font-weight:400;-webkit-text-stroke:0.15px #6f6f6f;;transform:scaleX(0.9542);">Podgląd</div>
<div class="t " style="left:806.30px;top:159.40px;color:#6f6f6f;font-size:12.4px;font-weight:400;-webkit-text-stroke:0.15px #6f6f6f;;transform:scaleX(0.9973);">wyników</div>
<div class="t " style="left:886.70px;top:132.50px;color:#6f6f6f;font-size:12.4px;font-weight:400;-webkit-text-stroke:0.15px #6f6f6f;;transform:scaleX(0.9183);">Znajdź adresata</div>
<div class="t " style="left:887.50px;top:155.80px;color:#6f6f6f;font-size:12.4px;font-weight:400;-webkit-text-stroke:0.15px #6f6f6f;;transform:scaleX(0.9289);">Sprawdź błędy</div>
<div class="t " style="left:1011.90px;top:143.70px;color:#6f6f6f;font-size:12.4px;font-weight:400;-webkit-text-stroke:0.15px #6f6f6f;;transform:scaleX(0.9375);">Zakończ</div>
<div class="t " style="left:1017.80px;top:159.40px;color:#6f6f6f;font-size:12.4px;font-weight:400;-webkit-text-stroke:0.15px #6f6f6f;;transform:scaleX(0.8607);">i scal</div>
<div class="t " style="left:112.70px;top:178.60px;color:#161616;font-size:12.4px;font-weight:400;-webkit-text-stroke:0.15px #161616;;transform:scaleX(0.8763);">Tworzenie</div>
<div class="t " style="left:192.70px;top:178.60px;color:#161616;font-size:12.4px;font-weight:400;-webkit-text-stroke:0.15px #161616;;transform:scaleX(0.9239);">Rozpoczynanie korespondencji seryjnej</div>
<div class="t " style="left:523.80px;top:178.60px;color:#161616;font-size:12.4px;font-weight:400;-webkit-text-stroke:0.15px #161616;;transform:scaleX(0.9525);">Wpisywanie i wstawianie pól</div>
<div class="t " style="left:856.70px;top:178.60px;color:#161616;font-size:12.4px;font-weight:400;-webkit-text-stroke:0.15px #161616;;transform:scaleX(0.9483);">Podgląd wyników</div>
<div class="t " style="left:1009.50px;top:178.60px;color:#161616;font-size:12.4px;font-weight:400;-webkit-text-stroke:0.15px #161616;;transform:scaleX(0.8726);">Kończenie</div>
<div class="t " style="left:121.50px;top:308.27px;color:#151515;font-size:12.2px;font-weight:400;-webkit-text-stroke:0.22px #151515;;transform:scaleX(1.0592);"><span class="u">Lorem</span> <span class="u">ipsum</span> <span class="u">dolor</span> sit <span class="u">amet</span> <span class="u">consectetuer</span> <span class="u">nascetur</span> vitae <span class="u">felis</span> <span class="u">tellus</span> <span class="u">Pellentesque</span>. Ut <span class="u">Mauris</span> <span class="u">volutpat</span> <span class="u">sem</span></div>
<div class="t " style="left:121.50px;top:326.97px;color:#151515;font-size:12.2px;font-weight:400;-webkit-text-stroke:0.22px #151515;;transform:scaleX(1.0478);"><span class="u">massa</span> <span class="u">natoque</span> <span class="u">Curabitur</span> <span class="u">ut</span> Nam <span class="u">convallis</span> <span class="u">quis</span>. <span class="u">Velit</span> <span class="u">turpis</span> <span class="u">felis</span> Nam <span class="u">lacinia</span> <span class="u">penatibus</span> <span class="u">egestas</span> mi <span class="u">nisl</span> <span class="u">eu</span></div>
<div class="t " style="left:134.50px;top:345.47px;color:#151515;font-size:12.2px;font-weight:400;-webkit-text-stroke:0.22px #151515;;transform:scaleX(1.0461);"><span class="u">Ut</span>. At et <span class="u">quis</span> <span class="u">consectetuer</span> <span class="u">Sed</span> <span class="u">ante</span> vitae <span class="u">neque</span> Nunc <span class="u">odio</span> ac. <span class="u">Tristique</span> <span class="u">congue</span> <span class="u">dignissim</span> <span class="u">congue</span> <span class="u">eget</span></div>
<div class="t " style="left:653.50px;top:364.77px;color:#151515;font-size:12.2px;font-weight:400;-webkit-text-stroke:0.22px #151515;;"><span class="u">lacinia</span> <span class="u">Sed</span>.</div>
<div class="t " style="left:120.50px;top:418.27px;color:#d80a0a;font-size:12.2px;font-weight:700;-webkit-text-stroke:0.1px #d80a0a;;transform:scaleX(1.0047);"><span class="u">Sagittis</span> <span class="u">tristique</span> <span class="u">ut</span> id vel sit <span class="u">lobortis</span> <span class="u">pretium</span> et <span class="u">Lorem</span> <span class="u">tincidunt</span>. <span class="u">Metus</span> <span class="u">at</span> <span class="u">odio</span> <span class="u">lacus</span> <span class="u">Donec</span> <span class="u">velit</span> <span class="u">eget</span></div>
<div class="t " style="left:123.50px;top:436.97px;color:#d80a0a;font-size:12.2px;font-weight:700;-webkit-text-stroke:0.1px #d80a0a;;transform:scaleX(0.9977);"><span class="u">habitasse</span> et vel <span class="u">pretium</span>. <span class="u">Suspendisse</span> <span class="u">Aenean</span> <span class="u">eget</span> <span class="u">Integer</span> vel mi vel <span class="u">risus</span> <span class="u">mauris</span> <span class="u">Maecenas</span> <span class="u">laoreet</span>.</div>
<div class="t " style="left:119.80px;top:455.47px;color:#d80a0a;font-size:12.2px;font-weight:700;-webkit-text-stroke:0.1px #d80a0a;;transform:scaleX(1.0031);"><span class="u">Enim</span> Cum et <span class="u">tincidunt</span> <span class="u">dolor</span> <span class="u">condimentum</span> <span class="u">ut</span> <span class="u">sodales</span> <span class="u">Morbi</span> <span class="u">libero</span> <span class="u">morbi</span>. Eu <span class="u">Ut</span> <span class="u">eget</span> <span class="u">Curabitur</span> <span class="u">sed</span> sit</div>
<div class="t " style="left:258.00px;top:474.77px;color:#d80a0a;font-size:12.2px;font-weight:700;-webkit-text-stroke:0.1px #d80a0a;;transform:scaleX(0.9970);"><span class="u">Phasellus</span> <span class="u">Integer</span> <span class="u">metus</span> id et. <span class="u">Sed</span> <span class="u">eget</span> <span class="u">condimentum</span>.</div>
<div class="t " style="left:112.50px;top:528.27px;color:#151515;font-size:12.2px;font-weight:700;-webkit-text-stroke:0.1px #151515;white-space:nowrap;;width:610.10px;text-align:justify;text-align-last:justify;transform:scaleX(0.9900);"><span class="u">Tempor</span> <span class="u">Quisque</span> Nulla in a <span class="u">Ut</span> <span class="u">Pellentesque</span> <span class="u">ac</span> <span class="u">ut</span> <span class="u">ipsum</span> <span class="u">tellus</span>. <span class="u">Sociis</span> <span class="u">rhoncus</span> <span class="u">metus</span> <span class="u">Curabitur</span> <span class="u">felis</span> in et</div>
<div class="t " style="left:112.50px;top:546.97px;color:#151515;font-size:12.2px;font-weight:700;-webkit-text-stroke:0.1px #151515;white-space:nowrap;;width:610.10px;text-align:justify;text-align-last:justify;transform:scaleX(0.9900);"><span class="u">Aenean</span> wisi Nunc <span class="u">risus</span>. <span class="u">Lacus</span> <span class="u">tellus</span> <span class="u">Vestibulum</span> <span class="u">mattis</span> <span class="u">Cras</span> <span class="u">odio</span> vitae <span class="u">pretium</span> <span class="u">sollicitudin</span> <span class="u">Curabitur</span></div>
<div class="t " style="left:112.50px;top:565.47px;color:#151515;font-size:12.2px;font-weight:700;-webkit-text-stroke:0.1px #151515;white-space:nowrap;;width:617.83px;text-align:justify;text-align-last:justify;transform:scaleX(0.9776);"><span class="u">consequat</span>. Urna <span class="u">habitant</span> <span class="u">quam</span> <span class="u">convallis</span> <span class="u">libero</span> <span class="u">consectetuer</span> <span class="u">nulla</span> <span class="u">semper</span> Proin et <span class="u">convallis</span>. <span class="u">Lacus</span> <span class="u">neque</span></div>
<div class="t " style="left:112.50px;top:584.77px;color:#151515;font-size:12.2px;font-weight:700;-webkit-text-stroke:0.1px #151515;;transform:scaleX(0.9900);"><span class="u">sem</span> <span class="u">habitant</span> <span class="u">ac</span> <span class="u">dolor</span> <span class="u">facilisi</span> <span class="u">tortor</span> <span class="u">risus</span> <span class="u">faucibus</span> id. <span class="u">Sed</span> <span class="u">platea</span> <span class="u">Donec</span> elit <span class="u">dignissim</span> et.</div>
<div class="t " style="left:112.50px;top:638.07px;color:#151515;font-size:12.2px;font-weight:400;-webkit-text-stroke:0.22px #151515;;transform:scaleX(1.0571);"><span class="u">Pulvinar</span> <span class="u">gravida</span> <span class="u">pharetra</span> et <span class="u">interdum</span> <span class="u">sed</span> <span class="u">dui</span> <span class="u">augue</span> <span class="u">odio</span> vitae nunc. <span class="u">Aliquam</span> elit et vitae <span class="u">enim</span> <span class="u">Phasellus</span></div>
<div class="t " style="left:112.50px;top:656.67px;color:#151515;font-size:12.2px;font-weight:400;-webkit-text-stroke:0.22px #151515;;transform:scaleX(1.0749);"><span class="u">porttitor</span> <span class="u">hendrerit</span> <span class="u">sagittis</span> <span class="u">tempor</span> <span class="u">quam</span>. <span class="u">Quis</span> id urna <span class="u">laoreet</span> <span class="u">Lorem</span> <span class="u">tempor</span> <span class="u">morbi</span> <span class="u">convallis</span> <span class="u">ante</span> <span class="u">eget</span></div>
<div class="t " style="left:112.50px;top:675.07px;color:#151515;font-size:12.2px;font-weight:400;-webkit-text-stroke:0.22px #151515;;transform:scaleX(1.0496);"><span class="u">sapien</span>. <span class="u">Consequat</span> <span class="u">fermentum</span> eros <span class="u">Nullam</span> vitae <span class="u">nibh</span> In <span class="u">quis</span> ligula <span class="u">metus</span> <span class="u">Phasellus</span>. <span class="u">Curabitur</span></div>
<div class="t " style="left:112.50px;top:694.07px;color:#151515;font-size:12.2px;font-weight:400;-webkit-text-stroke:0.22px #151515;;transform:scaleX(1.0582);"><span class="u">condimentum</span> <span class="u">amet</span> <span class="u">nisl</span> <span class="u">amet</span> <span class="u">convallis</span> <span class="u">platea</span> <span class="u">turpis</span> <span class="u">sagittis</span>.</div>
<div class="t " style="left:814.00px;top:209.52px;color:#dcdcdc;font-size:22.3px;font-weight:400;;transform:scaleX(0.9210);">Udostępnianie</div>
<div class="t " style="left:814.00px;top:246.70px;color:#f2f2f2;font-size:12.4px;font-weight:400;-webkit-text-stroke:0.15px #f2f2f2;;transform:scaleX(0.9417);">Zaproś osoby</div>
<div class="t " style="left:820.20px;top:288.75px;color:#1e1e1e;font-size:12.4px;font-weight:400;-webkit-text-stroke:0.15px #1e1e1e;;transform:scaleX(0.9583);">Może edytować</div>
<div class="t " style="left:816.50px;top:310.09px;color:#6c6c6c;font-size:12px;font-weight:400;-webkit-text-stroke:0.15px #6c6c6c;;transform:scaleX(0.9513);">Dołącz wiadomość (opcjonalnie)</div>
<div class="t " style="left:1045.50px;top:372.00px;color:#1e1e1e;font-size:12.4px;font-weight:400;-webkit-text-stroke:0.15px #1e1e1e;;transform:scaleX(0.9597);">Udostępnij</div>
<div class="t " style="left:848.70px;top:427.50px;color:#f2f2f2;font-size:12.4px;font-weight:400;-webkit-text-stroke:0.15px #f2f2f2;;transform:scaleX(0.9606);">Udostępnij zmiany automatycznie:</div>
<div class="t " style="left:1047.00px;top:427.50px;color:#1e1e1e;font-size:12.4px;font-weight:400;-webkit-text-stroke:0.15px #1e1e1e;;transform:scaleX(0.9399);">Zapytaj</div>
<div class="t " style="left:863.00px;top:471.60px;color:#f4f4f4;font-size:15px;font-weight:400;-webkit-text-stroke:0.15px #f4f4f4;;transform:scaleX(0.9154);">Łukasz Tkacz</div>
<div class="t " style="left:863.00px;top:490.84px;color:#f2f2f2;font-size:12px;font-weight:400;-webkit-text-stroke:0.15px #f2f2f2;;transform:scaleX(0.9864);">Edytowanie</div>
<div class="t " style="left:863.30px;top:530.60px;color:#f4f4f4;font-size:15px;font-weight:400;-webkit-text-stroke:0.15px #f4f4f4;;transform:scaleX(0.9121);">Łukasz Tkacz</div>
<div class="t " style="left:863.30px;top:550.04px;color:#f2f2f2;font-size:12px;font-weight:400;-webkit-text-stroke:0.15px #f2f2f2;;transform:scaleX(0.9636);">Właściciel</div>
<div class="t " style="left:814.70px;top:706.67px;color:#f0f0f0;font-size:14.8px;font-weight:400;-webkit-text-stroke:0.15px #f0f0f0;;transform:scaleX(0.9710);">Uzyskaj link do udostępniania</div>
<div class="t " style="left:94.70px;top:737.73px;color:#f0f0f0;font-size:11.3px;font-weight:400;-webkit-text-stroke:0.15px #f0f0f0;;transform:scaleX(0.9619);">Strona 1 z 1</div>
<div class="t " style="left:174.20px;top:737.73px;color:#f0f0f0;font-size:11.3px;font-weight:400;-webkit-text-stroke:0.15px #f0f0f0;;transform:scaleX(0.9380);">Wyrazy: 223</div>
<div class="t " style="left:1072.00px;top:737.73px;color:#f0f0f0;font-size:11.3px;font-weight:400;-webkit-text-stroke:0.15px #f0f0f0;;transform:scaleX(0.9237);">100%</div>

<svg class="a" style="left:0;top:0;pointer-events:none" width="1200" height="800"><path d="M121.50 321.5 L123.50 319.5 L125.50 321.5 L127.50 319.5 L129.50 321.5 L131.50 319.5 L133.50 321.5 L135.50 319.5 L137.50 321.5 L139.50 319.5 L141.50 321.5 L143.50 319.5 L145.50 321.5 L147.50 319.5 L149.50 321.5 L151.50 319.5 L153.50 321.5 L155.50 319.5 L157.50 321.5 M161.68 321.5 L163.68 319.5 L165.68 321.5 L167.68 319.5 L169.68 321.5 L171.68 319.5 L173.68 321.5 L175.68 319.5 L177.68 321.5 L179.68 319.5 L181.68 321.5 L183.68 319.5 L185.68 321.5 L187.68 319.5 L189.68 321.5 L191.68 319.5 L193.68 321.5 L195.68 319.5 M199.72 321.5 L201.72 319.5 L203.72 321.5 L205.72 319.5 L207.72 321.5 L209.72 319.5 L211.72 321.5 L213.72 319.5 L215.72 321.5 L217.72 319.5 L219.72 321.5 L221.72 319.5 L223.72 321.5 L225.72 319.5 L227.72 321.5 M248.52 321.5 L250.52 319.5 L252.52 321.5 L254.52 319.5 L256.52 321.5 L258.52 319.5 L260.52 321.5 L262.52 319.5 L264.52 321.5 L266.52 319.5 L268.52 321.5 L270.52 319.5 L272.52 321.5 L274.52 319.5 L276.52 321.5 M280.83 321.5 L282.83 319.5 L284.83 321.5 L286.83 319.5 L288.83 321.5 L290.83 319.5 L292.83 321.5 L294.83 319.5 L296.83 321.5 L298.83 319.5 L300.83 321.5 L302.83 319.5 L304.83 321.5 L306.83 319.5 L308.83 321.5 L310.83 319.5 L312.83 321.5 L314.83 319.5 L316.83 321.5 L318.83 319.5 L320.83 321.5 L322.83 319.5 L324.83 321.5 L326.83 319.5 L328.83 321.5 L330.83 319.5 L332.83 321.5 L334.83 319.5 L336.83 321.5 L338.83 319.5 L340.83 321.5 L342.83 319.5 L344.83 321.5 L346.83 319.5 L348.83 321.5 L350.83 319.5 L352.83 321.5 M358.33 321.5 L360.33 319.5 L362.33 321.5 L364.33 319.5 L366.33 321.5 L368.33 319.5 L370.33 321.5 L372.33 319.5 L374.33 321.5 L376.33 319.5 L378.33 321.5 L380.33 319.5 L382.33 321.5 L384.33 319.5 L386.33 321.5 L388.33 319.5 L390.33 321.5 L392.33 319.5 L394.33 321.5 L396.33 319.5 L398.33 321.5 L400.33 319.5 L402.33 321.5 L404.33 319.5 L406.33 321.5 M442.31 321.5 L444.31 319.5 L446.31 321.5 L448.31 319.5 L450.31 321.5 L452.31 319.5 L454.31 321.5 L456.31 319.5 L458.31 321.5 L460.31 319.5 L462.31 321.5 L464.31 319.5 M468.87 321.5 L470.87 319.5 L472.87 321.5 L474.87 319.5 L476.87 321.5 L478.87 319.5 L480.87 321.5 L482.87 319.5 L484.87 321.5 L486.87 319.5 L488.87 321.5 L490.87 319.5 L492.87 321.5 L494.87 319.5 L496.87 321.5 L498.87 319.5 M502.60 321.5 L504.60 319.5 L506.60 321.5 L508.60 319.5 L510.60 321.5 L512.60 319.5 L514.60 321.5 L516.60 319.5 L518.60 321.5 L520.60 319.5 L522.60 321.5 L524.60 319.5 L526.60 321.5 L528.60 319.5 L530.60 321.5 L532.60 319.5 L534.60 321.5 L536.60 319.5 L538.60 321.5 L540.60 319.5 L542.60 321.5 L544.60 319.5 L546.60 321.5 L548.60 319.5 L550.60 321.5 L552.60 319.5 L554.60 321.5 L556.60 319.5 L558.60 321.5 L560.60 319.5 L562.60 321.5 L564.60 319.5 L566.60 321.5 L568.60 319.5 L570.60 321.5 L572.60 319.5 L574.60 321.5 L576.60 319.5 M600.94 321.5 L602.94 319.5 L604.94 321.5 L606.94 319.5 L608.94 321.5 L610.94 319.5 L612.94 321.5 L614.94 319.5 L616.94 321.5 L618.94 319.5 L620.94 321.5 L622.94 319.5 L624.94 321.5 L626.94 319.5 L628.94 321.5 L630.94 319.5 L632.94 321.5 L634.94 319.5 L636.94 321.5 L638.94 319.5 M643.27 321.5 L645.27 319.5 L647.27 321.5 L649.27 319.5 L651.27 321.5 L653.27 319.5 L655.27 321.5 L657.27 319.5 L659.27 321.5 L661.27 319.5 L663.27 321.5 L665.27 319.5 L667.27 321.5 L669.27 319.5 L671.27 321.5 L673.27 319.5 L675.27 321.5 L677.27 319.5 L679.27 321.5 L681.27 319.5 L683.27 321.5 L685.27 319.5 L687.27 321.5 M692.08 321.5 L694.08 319.5 L696.08 321.5 L698.08 319.5 L700.08 321.5 L702.08 319.5 L704.08 321.5 L706.08 319.5 L708.08 321.5 L710.08 319.5 L712.08 321.5 L714.08 319.5 L716.08 321.5 M121.50 340.5 L123.50 338.5 L125.50 340.5 L127.50 338.5 L129.50 340.5 L131.50 338.5 L133.50 340.5 L135.50 338.5 L137.50 340.5 L139.50 338.5 L141.50 340.5 L143.50 338.5 L145.50 340.5 L147.50 338.5 L149.50 340.5 L151.50 338.5 L153.50 340.5 L155.50 338.5 L157.50 340.5 M162.68 340.5 L164.68 338.5 L166.68 340.5 L168.68 338.5 L170.68 340.5 L172.68 338.5 L174.68 340.5 L176.68 338.5 L178.68 340.5 L180.68 338.5 L182.68 340.5 L184.68 338.5 L186.68 340.5 L188.68 338.5 L190.68 340.5 L192.68 338.5 L194.68 340.5 L196.68 338.5 L198.68 340.5 L200.68 338.5 L202.68 340.5 L204.68 338.5 L206.68 340.5 L208.68 338.5 M212.40 340.5 L214.40 338.5 L216.40 340.5 L218.40 338.5 L220.40 340.5 L222.40 338.5 L224.40 340.5 L226.40 338.5 L228.40 340.5 L230.40 338.5 L232.40 340.5 L234.40 338.5 L236.40 340.5 L238.40 338.5 L240.40 340.5 L242.40 338.5 L244.40 340.5 L246.40 338.5 L248.40 340.5 L250.40 338.5 L252.40 340.5 L254.40 338.5 L256.40 340.5 L258.40 338.5 L260.40 340.5 L262.40 338.5 L264.40 340.5 M268.47 340.5 L270.47 338.5 L272.47 340.5 L274.47 338.5 L276.47 340.5 L278.47 338.5 M313.20 340.5 L315.20 338.5 L317.20 340.5 L319.20 338.5 L321.20 340.5 L323.20 338.5 L325.20 340.5 L327.20 338.5 L329.20 340.5 L331.20 338.5 L333.20 340.5 L335.20 338.5 L337.20 340.5 L339.20 338.5 L341.20 340.5 L343.20 338.5 L345.20 340.5 L347.20 338.5 L349.20 340.5 L351.20 338.5 L353.20 340.5 L355.20 338.5 L357.20 340.5 L359.20 338.5 L361.20 340.5 M365.74 340.5 L367.74 338.5 L369.74 340.5 L371.74 338.5 L373.74 340.5 L375.74 338.5 L377.74 340.5 L379.74 338.5 L381.74 340.5 L383.74 338.5 L385.74 340.5 L387.74 338.5 M396.27 340.5 L398.27 338.5 L400.27 340.5 L402.27 338.5 L404.27 340.5 L406.27 338.5 L408.27 340.5 L410.27 338.5 L412.27 340.5 L414.27 338.5 L416.27 340.5 L418.27 338.5 L420.27 340.5 M423.97 340.5 L425.97 338.5 L427.97 340.5 L429.97 338.5 L431.97 340.5 L433.97 338.5 L435.97 340.5 L437.97 338.5 L439.97 340.5 L441.97 338.5 L443.97 340.5 L445.97 338.5 L447.97 340.5 L449.97 338.5 L451.97 340.5 L453.97 338.5 M458.76 340.5 L460.76 338.5 L462.76 340.5 L464.76 338.5 L466.76 340.5 L468.76 338.5 L470.76 340.5 L472.76 338.5 L474.76 340.5 L476.76 338.5 L478.76 340.5 L480.76 338.5 M515.55 340.5 L517.55 338.5 L519.55 340.5 L521.55 338.5 L523.55 340.5 L525.55 338.5 L527.55 340.5 L529.55 338.5 L531.55 340.5 L533.55 338.5 L535.55 340.5 L537.55 338.5 L539.55 340.5 L541.55 338.5 L543.55 340.5 L545.55 338.5 L547.55 340.5 L549.55 338.5 L551.55 340.5 M555.32 340.5 L557.32 338.5 L559.32 340.5 L561.32 338.5 L563.32 340.5 L565.32 338.5 L567.32 340.5 L569.32 338.5 L571.32 340.5 L573.32 338.5 L575.32 340.5 L577.32 338.5 L579.32 340.5 L581.32 338.5 L583.32 340.5 L585.32 338.5 L587.32 340.5 L589.32 338.5 L591.32 340.5 L593.32 338.5 L595.32 340.5 L597.32 338.5 L599.32 340.5 L601.32 338.5 L603.32 340.5 L605.32 338.5 L607.32 340.5 L609.32 338.5 M614.26 340.5 L616.26 338.5 L618.26 340.5 L620.26 338.5 L622.26 340.5 L624.26 338.5 L626.26 340.5 L628.26 338.5 L630.26 340.5 L632.26 338.5 L634.26 340.5 L636.26 338.5 L638.26 340.5 L640.26 338.5 L642.26 340.5 L644.26 338.5 L646.26 340.5 L648.26 338.5 L650.26 340.5 L652.26 338.5 L654.26 340.5 L656.26 338.5 L658.26 340.5 M679.57 340.5 L681.57 338.5 L683.57 340.5 L685.57 338.5 L687.57 340.5 L689.57 338.5 L691.57 340.5 L693.57 338.5 L695.57 340.5 L697.57 338.5 M702.29 340.5 L704.29 338.5 L706.29 340.5 L708.29 338.5 L710.29 340.5 L712.29 338.5 L714.29 340.5 L716.29 338.5 M134.50 358.5 L136.50 356.5 L138.50 358.5 L140.50 356.5 L142.50 358.5 L144.50 356.5 L146.50 358.5 M183.41 358.5 L185.41 356.5 L187.41 358.5 L189.41 356.5 L191.41 358.5 L193.41 356.5 L195.41 358.5 L197.41 356.5 L199.41 358.5 L201.41 356.5 L203.41 358.5 L205.41 356.5 M210.34 358.5 L212.34 356.5 L214.34 358.5 L216.34 356.5 L218.34 358.5 L220.34 356.5 L222.34 358.5 L224.34 356.5 L226.34 358.5 L228.34 356.5 L230.34 358.5 L232.34 356.5 L234.34 358.5 L236.34 356.5 L238.34 358.5 L240.34 356.5 L242.34 358.5 L244.34 356.5 L246.34 358.5 L248.34 356.5 L250.34 358.5 L252.34 356.5 L254.34 358.5 L256.34 356.5 L258.34 358.5 L260.34 356.5 L262.34 358.5 L264.34 356.5 L266.34 358.5 L268.34 356.5 L270.34 358.5 L272.34 356.5 L274.34 358.5 L276.34 356.5 L278.34 358.5 L280.34 356.5 L282.34 358.5 M286.89 358.5 L288.89 356.5 L290.89 358.5 L292.89 356.5 L294.89 358.5 L296.89 356.5 L298.89 358.5 L300.89 356.5 L302.89 358.5 L304.89 356.5 L306.89 358.5 L308.89 356.5 M313.12 358.5 L315.12 356.5 L317.12 358.5 L319.12 356.5 L321.12 358.5 L323.12 356.5 L325.12 358.5 L327.12 356.5 L329.12 358.5 L331.12 356.5 L333.12 358.5 L335.12 356.5 L337.12 358.5 M371.98 358.5 L373.98 356.5 L375.98 358.5 L377.98 356.5 L379.98 358.5 L381.98 356.5 L383.98 358.5 L385.98 356.5 L387.98 358.5 L389.98 356.5 L391.98 358.5 L393.98 356.5 L395.98 358.5 L397.98 356.5 L399.98 358.5 L401.98 356.5 L403.98 358.5 L405.98 356.5 M444.29 358.5 L446.29 356.5 L448.29 358.5 L450.29 356.5 L452.29 358.5 L454.29 356.5 L456.29 358.5 L458.29 356.5 L460.29 358.5 L462.29 356.5 L464.29 358.5 L466.29 356.5 L468.29 358.5 M492.27 358.5 L494.27 356.5 L496.27 358.5 L498.27 356.5 L500.27 358.5 L502.27 356.5 L504.27 358.5 L506.27 356.5 L508.27 358.5 L510.27 356.5 L512.27 358.5 L514.27 356.5 L516.27 358.5 L518.27 356.5 L520.27 358.5 L522.27 356.5 L524.27 358.5 L526.27 356.5 L528.27 358.5 L530.27 356.5 L532.27 358.5 L534.27 356.5 L536.27 358.5 L538.27 356.5 L540.27 358.5 M544.23 358.5 L546.23 356.5 L548.23 358.5 L550.23 356.5 L552.23 358.5 L554.23 356.5 L556.23 358.5 L558.23 356.5 L560.23 358.5 L562.23 356.5 L564.23 358.5 L566.23 356.5 L568.23 358.5 L570.23 356.5 L572.23 358.5 L574.23 356.5 L576.23 358.5 L578.23 356.5 L580.23 358.5 L582.23 356.5 L584.23 358.5 M589.60 358.5 L591.60 356.5 L593.60 358.5 L595.60 356.5 L597.60 358.5 L599.60 356.5 L601.60 358.5 L603.60 356.5 L605.60 358.5 L607.60 356.5 L609.60 358.5 L611.60 356.5 L613.60 358.5 L615.60 356.5 L617.60 358.5 L619.60 356.5 L621.60 358.5 L623.60 356.5 L625.60 358.5 L627.60 356.5 L629.60 358.5 L631.60 356.5 L633.60 358.5 L635.60 356.5 L637.60 358.5 L639.60 356.5 L641.60 358.5 M646.30 358.5 L648.30 356.5 L650.30 358.5 L652.30 356.5 L654.30 358.5 L656.30 356.5 L658.30 358.5 L660.30 356.5 L662.30 358.5 L664.30 356.5 L666.30 358.5 L668.30 356.5 L670.30 358.5 L672.30 356.5 L674.30 358.5 L676.30 356.5 L678.30 358.5 L680.30 356.5 L682.30 358.5 L684.30 356.5 L686.30 358.5 M691.68 358.5 L693.68 356.5 L695.68 358.5 L697.68 356.5 L699.68 358.5 L701.68 356.5 L703.68 358.5 L705.68 356.5 L707.68 358.5 L709.68 356.5 L711.68 358.5 L713.68 356.5 L715.68 358.5 M653.50 378.5 L655.50 376.5 L657.50 378.5 L659.50 376.5 L661.50 378.5 L663.50 376.5 L665.50 378.5 L667.50 376.5 L669.50 378.5 L671.50 376.5 L673.50 378.5 L675.50 376.5 L677.50 378.5 L679.50 376.5 L681.50 378.5 L683.50 376.5 L685.50 378.5 L687.50 376.5 M691.45 378.5 L693.45 376.5 L695.45 378.5 L697.45 376.5 L699.45 378.5 L701.45 376.5 L703.45 378.5 L705.45 376.5 L707.45 378.5 L709.45 376.5 L711.45 378.5 M120.50 431.5 L122.50 429.5 L124.50 431.5 L126.50 429.5 L128.50 431.5 L130.50 429.5 L132.50 431.5 L134.50 429.5 L136.50 431.5 L138.50 429.5 L140.50 431.5 L142.50 429.5 L144.50 431.5 L146.50 429.5 L148.50 431.5 L150.50 429.5 L152.50 431.5 L154.50 429.5 L156.50 431.5 L158.50 429.5 L160.50 431.5 L162.50 429.5 L164.50 431.5 M168.14 431.5 L170.14 429.5 L172.14 431.5 L174.14 429.5 L176.14 431.5 L178.14 429.5 L180.14 431.5 L182.14 429.5 L184.14 431.5 L186.14 429.5 L188.14 431.5 L190.14 429.5 L192.14 431.5 L194.14 429.5 L196.14 431.5 L198.14 429.5 L200.14 431.5 L202.14 429.5 L204.14 431.5 L206.14 429.5 L208.14 431.5 L210.14 429.5 L212.14 431.5 L214.14 429.5 L216.14 431.5 M219.86 431.5 L221.86 429.5 L223.86 431.5 L225.86 429.5 L227.86 431.5 L229.86 429.5 M287.23 431.5 L289.23 429.5 L291.23 431.5 L293.23 429.5 L295.23 431.5 L297.23 429.5 L299.23 431.5 L301.23 429.5 L303.23 431.5 L305.23 429.5 L307.23 431.5 L309.23 429.5 L311.23 431.5 L313.23 429.5 L315.23 431.5 L317.23 429.5 L319.23 431.5 L321.23 429.5 L323.23 431.5 L325.23 429.5 L327.23 431.5 L329.23 429.5 L331.23 431.5 M335.54 431.5 L337.54 429.5 L339.54 431.5 L341.54 429.5 L343.54 431.5 L345.54 429.5 L347.54 431.5 L349.54 429.5 L351.54 431.5 L353.54 429.5 L355.54 431.5 L357.54 429.5 L359.54 431.5 L361.54 429.5 L363.54 431.5 L365.54 429.5 L367.54 431.5 L369.54 429.5 L371.54 431.5 L373.54 429.5 L375.54 431.5 L377.54 429.5 L379.54 431.5 M398.14 431.5 L400.14 429.5 L402.14 431.5 L404.14 429.5 L406.14 431.5 L408.14 429.5 L410.14 431.5 L412.14 429.5 L414.14 431.5 L416.14 429.5 L418.14 431.5 L420.14 429.5 L422.14 431.5 L424.14 429.5 L426.14 431.5 L428.14 429.5 L430.14 431.5 L432.14 429.5 L434.14 431.5 M438.97 431.5 L440.97 429.5 L442.97 431.5 L444.97 429.5 L446.97 431.5 L448.97 429.5 L450.97 431.5 L452.97 429.5 L454.97 431.5 L456.97 429.5 L458.97 431.5 L460.97 429.5 L462.97 431.5 L464.97 429.5 L466.97 431.5 L468.97 429.5 L470.97 431.5 L472.97 429.5 L474.97 431.5 L476.97 429.5 L478.97 431.5 L480.97 429.5 L482.97 431.5 L484.97 429.5 L486.97 431.5 L488.97 429.5 M497.48 431.5 L499.48 429.5 L501.48 431.5 L503.48 429.5 L505.48 431.5 L507.48 429.5 L509.48 431.5 L511.48 429.5 L513.48 431.5 L515.48 429.5 L517.48 431.5 L519.48 429.5 L521.48 431.5 L523.48 429.5 L525.48 431.5 L527.48 429.5 L529.48 431.5 L531.48 429.5 M536.27 431.5 L538.27 429.5 L540.27 431.5 L542.27 429.5 L544.27 431.5 L546.27 429.5 M550.57 431.5 L552.57 429.5 L554.57 431.5 L556.57 429.5 L558.57 431.5 L560.57 429.5 L562.57 431.5 L564.57 429.5 L566.57 431.5 L568.57 429.5 L570.57 431.5 L572.57 429.5 L574.57 431.5 M579.84 431.5 L581.84 429.5 L583.84 431.5 L585.84 429.5 L587.84 431.5 L589.84 429.5 L591.84 431.5 L593.84 429.5 L595.84 431.5 L597.84 429.5 L599.84 431.5 L601.84 429.5 L603.84 431.5 L605.84 429.5 L607.84 431.5 L609.84 429.5 M614.56 431.5 L616.56 429.5 L618.56 431.5 L620.56 429.5 L622.56 431.5 L624.56 429.5 L626.56 431.5 L628.56 429.5 L630.56 431.5 L632.56 429.5 L634.56 431.5 L636.56 429.5 L638.56 431.5 L640.56 429.5 L642.56 431.5 L644.56 429.5 L646.56 431.5 L648.56 429.5 L650.56 431.5 M655.39 431.5 L657.39 429.5 L659.39 431.5 L661.39 429.5 L663.39 431.5 L665.39 429.5 L667.39 431.5 L669.39 429.5 L671.39 431.5 L673.39 429.5 L675.39 431.5 L677.39 429.5 L679.39 431.5 M683.30 431.5 L685.30 429.5 L687.30 431.5 L689.30 429.5 L691.30 431.5 L693.30 429.5 L695.30 431.5 L697.30 429.5 L699.30 431.5 L701.30 429.5 L703.30 431.5 L705.30 429.5 L707.30 431.5 M123.50 450.5 L125.50 448.5 L127.50 450.5 L129.50 448.5 L131.50 450.5 L133.50 448.5 L135.50 450.5 L137.50 448.5 L139.50 450.5 L141.50 448.5 L143.50 450.5 L145.50 448.5 L147.50 450.5 L149.50 448.5 L151.50 450.5 L153.50 448.5 L155.50 450.5 L157.50 448.5 L159.50 450.5 L161.50 448.5 L163.50 450.5 L165.50 448.5 L167.50 450.5 L169.50 448.5 L171.50 450.5 L173.50 448.5 L175.50 450.5 L177.50 448.5 L179.50 450.5 M217.46 450.5 L219.46 448.5 L221.46 450.5 L223.46 448.5 L225.46 450.5 L227.46 448.5 L229.46 450.5 L231.46 448.5 L233.46 450.5 L235.46 448.5 L237.46 450.5 L239.46 448.5 L241.46 450.5 L243.46 448.5 L245.46 450.5 L247.46 448.5 L249.46 450.5 L251.46 448.5 L253.46 450.5 L255.46 448.5 L257.46 450.5 L259.46 448.5 L261.46 450.5 M268.82 450.5 L270.82 448.5 L272.82 450.5 L274.82 448.5 L276.82 450.5 L278.82 448.5 L280.82 450.5 L282.82 448.5 L284.82 450.5 L286.82 448.5 L288.82 450.5 L290.82 448.5 L292.82 450.5 L294.82 448.5 L296.82 450.5 L298.82 448.5 L300.82 450.5 L302.82 448.5 L304.82 450.5 L306.82 448.5 L308.82 450.5 L310.82 448.5 L312.82 450.5 L314.82 448.5 L316.82 450.5 L318.82 448.5 L320.82 450.5 L322.82 448.5 L324.82 450.5 L326.82 448.5 L328.82 450.5 L330.82 448.5 L332.82 450.5 L334.82 448.5 L336.82 450.5 L338.82 448.5 L340.82 450.5 L342.82 448.5 M346.77 450.5 L348.77 448.5 L350.77 450.5 L352.77 448.5 L354.77 450.5 L356.77 448.5 L358.77 450.5 L360.77 448.5 L362.77 450.5 L364.77 448.5 L366.77 450.5 L368.77 448.5 L370.77 450.5 L372.77 448.5 L374.77 450.5 L376.77 448.5 L378.77 450.5 L380.77 448.5 L382.77 450.5 L384.77 448.5 L386.77 450.5 L388.77 448.5 M394.08 450.5 L396.08 448.5 L398.08 450.5 L400.08 448.5 L402.08 450.5 L404.08 448.5 L406.08 450.5 L408.08 448.5 L410.08 450.5 L412.08 448.5 L414.08 450.5 L416.08 448.5 L418.08 450.5 M422.47 450.5 L424.47 448.5 L426.47 450.5 L428.47 448.5 L430.47 450.5 L432.47 448.5 L434.47 450.5 L436.47 448.5 L438.47 450.5 L440.47 448.5 L442.47 450.5 L444.47 448.5 L446.47 450.5 L448.47 448.5 L450.47 450.5 L452.47 448.5 L454.47 450.5 L456.47 448.5 L458.47 450.5 L460.47 448.5 L462.47 450.5 M524.53 450.5 L526.53 448.5 L528.53 450.5 L530.53 448.5 L532.53 450.5 L534.53 448.5 L536.53 450.5 L538.53 448.5 L540.53 450.5 L542.53 448.5 L544.53 450.5 L546.53 448.5 L548.53 450.5 L550.53 448.5 L552.53 450.5 M556.99 450.5 L558.99 448.5 L560.99 450.5 L562.99 448.5 L564.99 450.5 L566.99 448.5 L568.99 450.5 L570.99 448.5 L572.99 450.5 L574.99 448.5 L576.99 450.5 L578.99 448.5 L580.99 450.5 L582.99 448.5 L584.99 450.5 L586.99 448.5 L588.99 450.5 L590.99 448.5 L592.99 450.5 L594.99 448.5 M600.24 450.5 L602.24 448.5 L604.24 450.5 L606.24 448.5 L608.24 450.5 L610.24 448.5 L612.24 450.5 L614.24 448.5 L616.24 450.5 L618.24 448.5 L620.24 450.5 L622.24 448.5 L624.24 450.5 L626.24 448.5 L628.24 450.5 L630.24 448.5 L632.24 450.5 L634.24 448.5 L636.24 450.5 L638.24 448.5 L640.24 450.5 L642.24 448.5 L644.24 450.5 L646.24 448.5 L648.24 450.5 L650.24 448.5 L652.24 450.5 L654.24 448.5 L656.24 450.5 L658.24 448.5 M661.76 450.5 L663.76 448.5 L665.76 450.5 L667.76 448.5 L669.76 450.5 L671.76 448.5 L673.76 450.5 L675.76 448.5 L677.76 450.5 L679.76 448.5 L681.76 450.5 L683.76 448.5 L685.76 450.5 L687.76 448.5 L689.76 450.5 L691.76 448.5 L693.76 450.5 L695.76 448.5 L697.76 450.5 L699.76 448.5 M119.80 468.5 L121.80 466.5 L123.80 468.5 L125.80 466.5 L127.80 468.5 L129.80 466.5 L131.80 468.5 L133.80 466.5 L135.80 468.5 L137.80 466.5 L139.80 468.5 L141.80 466.5 L143.80 468.5 L145.80 466.5 L147.80 468.5 M197.91 468.5 L199.91 466.5 L201.91 468.5 L203.91 466.5 L205.91 468.5 L207.91 466.5 L209.91 468.5 L211.91 466.5 L213.91 468.5 L215.91 466.5 L217.91 468.5 L219.91 466.5 L221.91 468.5 L223.91 466.5 L225.91 468.5 L227.91 466.5 L229.91 468.5 L231.91 466.5 L233.91 468.5 L235.91 466.5 L237.91 468.5 L239.91 466.5 L241.91 468.5 L243.91 466.5 L245.91 468.5 L247.91 466.5 M252.93 468.5 L254.93 466.5 L256.93 468.5 L258.93 466.5 L260.93 468.5 L262.93 466.5 L264.93 468.5 L266.93 466.5 L268.93 468.5 L270.93 466.5 L272.93 468.5 L274.93 466.5 L276.93 468.5 L278.93 466.5 L280.93 468.5 L282.93 466.5 M286.89 468.5 L288.89 466.5 L290.89 468.5 L292.89 466.5 L294.89 468.5 L296.89 466.5 L298.89 468.5 L300.89 466.5 L302.89 468.5 L304.89 466.5 L306.89 468.5 L308.89 466.5 L310.89 468.5 L312.89 466.5 L314.89 468.5 L316.89 466.5 L318.89 468.5 L320.89 466.5 L322.89 468.5 L324.89 466.5 L326.89 468.5 L328.89 466.5 L330.89 468.5 L332.89 466.5 L334.89 468.5 L336.89 466.5 L338.89 468.5 L340.89 466.5 L342.89 468.5 L344.89 466.5 L346.89 468.5 L348.89 466.5 L350.89 468.5 L352.89 466.5 L354.89 468.5 L356.89 466.5 L358.89 468.5 L360.89 466.5 L362.89 468.5 L364.89 466.5 L366.89 468.5 M370.45 468.5 L372.45 466.5 L374.45 468.5 L376.45 466.5 L378.45 468.5 L380.45 466.5 M385.40 468.5 L387.40 466.5 L389.40 468.5 L391.40 466.5 L393.40 468.5 L395.40 466.5 L397.40 468.5 L399.40 466.5 L401.40 468.5 L403.40 466.5 L405.40 468.5 L407.40 466.5 L409.40 468.5 L411.40 466.5 L413.40 468.5 L415.40 466.5 L417.40 468.5 L419.40 466.5 L421.40 468.5 L423.40 466.5 L425.40 468.5 L427.40 466.5 L429.40 468.5 M434.33 468.5 L436.33 466.5 L438.33 468.5 L440.33 466.5 L442.33 468.5 L444.33 466.5 L446.33 468.5 L448.33 466.5 L450.33 468.5 L452.33 466.5 L454.33 468.5 L456.33 466.5 L458.33 468.5 L460.33 466.5 L462.33 468.5 L464.33 466.5 L466.33 468.5 M471.01 468.5 L473.01 466.5 L475.01 468.5 L477.01 466.5 L479.01 468.5 L481.01 466.5 L483.01 468.5 L485.01 466.5 L487.01 468.5 L489.01 466.5 L491.01 468.5 L493.01 466.5 L495.01 468.5 L497.01 466.5 L499.01 468.5 L501.01 466.5 L503.01 468.5 M507.70 468.5 L509.70 466.5 L511.70 468.5 L513.70 466.5 L515.70 468.5 L517.70 466.5 L519.70 468.5 L521.70 466.5 L523.70 468.5 L525.70 466.5 L527.70 468.5 L529.70 466.5 L531.70 468.5 L533.70 466.5 L535.70 468.5 L537.70 466.5 L539.70 468.5 M567.48 468.5 L569.48 466.5 L571.48 468.5 L573.48 466.5 L575.48 468.5 L577.48 466.5 L579.48 468.5 M583.79 468.5 L585.79 466.5 L587.79 468.5 L589.79 466.5 L591.79 468.5 L593.79 466.5 L595.79 468.5 L597.79 466.5 L599.79 468.5 L601.79 466.5 L603.79 468.5 L605.79 466.5 L607.79 468.5 M612.33 468.5 L614.33 466.5 L616.33 468.5 L618.33 466.5 L620.33 468.5 L622.33 466.5 L624.33 468.5 L626.33 466.5 L628.33 468.5 L630.33 466.5 L632.33 468.5 L634.33 466.5 L636.33 468.5 L638.33 466.5 L640.33 468.5 L642.33 466.5 L644.33 468.5 L646.33 466.5 L648.33 468.5 L650.33 466.5 L652.33 468.5 L654.33 466.5 L656.33 468.5 L658.33 466.5 L660.33 468.5 L662.33 466.5 L664.33 468.5 L666.33 466.5 M670.75 468.5 L672.75 466.5 L674.75 468.5 L676.75 466.5 L678.75 468.5 L680.75 466.5 L682.75 468.5 L684.75 466.5 L686.75 468.5 L688.75 466.5 L690.75 468.5 M258.00 488.5 L260.00 486.5 L262.00 488.5 L264.00 486.5 L266.00 488.5 L268.00 486.5 L270.00 488.5 L272.00 486.5 L274.00 488.5 L276.00 486.5 L278.00 488.5 L280.00 486.5 L282.00 488.5 L284.00 486.5 L286.00 488.5 L288.00 486.5 L290.00 488.5 L292.00 486.5 L294.00 488.5 L296.00 486.5 L298.00 488.5 L300.00 486.5 L302.00 488.5 L304.00 486.5 L306.00 488.5 L308.00 486.5 L310.00 488.5 L312.00 486.5 L314.00 488.5 M318.12 488.5 L320.12 486.5 L322.12 488.5 L324.12 486.5 L326.12 488.5 L328.12 486.5 L330.12 488.5 L332.12 486.5 L334.12 488.5 L336.12 486.5 L338.12 488.5 L340.12 486.5 L342.12 488.5 L344.12 486.5 L346.12 488.5 L348.12 486.5 L350.12 488.5 L352.12 486.5 L354.12 488.5 L356.12 486.5 L358.12 488.5 M362.02 488.5 L364.02 486.5 L366.02 488.5 L368.02 486.5 L370.02 488.5 L372.02 486.5 L374.02 488.5 L376.02 486.5 L378.02 488.5 L380.02 486.5 L382.02 488.5 L384.02 486.5 L386.02 488.5 L388.02 486.5 L390.02 488.5 L392.02 486.5 L394.02 488.5 L396.02 486.5 M432.93 488.5 L434.93 486.5 L436.93 488.5 L438.93 486.5 L440.93 488.5 L442.93 486.5 L444.93 488.5 L446.93 486.5 L448.93 488.5 L450.93 486.5 L452.93 488.5 L454.93 486.5 M458.60 488.5 L460.60 486.5 L462.60 488.5 L464.60 486.5 L466.60 488.5 L468.60 486.5 L470.60 488.5 L472.60 486.5 L474.60 488.5 L476.60 486.5 L478.60 488.5 L480.60 486.5 L482.60 488.5 M486.97 488.5 L488.97 486.5 L490.97 488.5 L492.97 486.5 L494.97 488.5 L496.97 486.5 L498.97 488.5 L500.97 486.5 L502.97 488.5 L504.97 486.5 L506.97 488.5 L508.97 486.5 L510.97 488.5 L512.97 486.5 L514.97 488.5 L516.97 486.5 L518.97 488.5 L520.97 486.5 L522.97 488.5 L524.97 486.5 L526.97 488.5 L528.97 486.5 L530.97 488.5 L532.97 486.5 L534.97 488.5 L536.97 486.5 L538.97 488.5 L540.97 486.5 L542.97 488.5 L544.97 486.5 L546.97 488.5 L548.97 486.5 L550.97 488.5 L552.97 486.5 L554.97 488.5 L556.97 486.5 L558.97 488.5 L560.97 486.5 L562.97 488.5 L564.97 486.5 M112.50 541.5 L114.50 539.5 L116.50 541.5 L118.50 539.5 L120.50 541.5 L122.50 539.5 L124.50 541.5 L126.50 539.5 L128.50 541.5 L130.50 539.5 L132.50 541.5 L134.50 539.5 L136.50 541.5 L138.50 539.5 L140.50 541.5 L142.50 539.5 L144.50 541.5 L146.50 539.5 L148.50 541.5 L150.50 539.5 L152.50 541.5 L154.50 539.5 M159.65 541.5 L161.65 539.5 L163.65 541.5 L165.65 539.5 L167.65 541.5 L169.65 539.5 L171.65 541.5 L173.65 539.5 L175.65 541.5 L177.65 539.5 L179.65 541.5 L181.65 539.5 L183.65 541.5 L185.65 539.5 L187.65 541.5 L189.65 539.5 L191.65 541.5 L193.65 539.5 L195.65 541.5 L197.65 539.5 L199.65 541.5 L201.65 539.5 L203.65 541.5 L205.65 539.5 L207.65 541.5 M270.00 541.5 L272.00 539.5 L274.00 541.5 L276.00 539.5 L278.00 541.5 L280.00 539.5 L282.00 541.5 M286.54 541.5 L288.54 539.5 L290.54 541.5 L292.54 539.5 L294.54 541.5 L296.54 539.5 L298.54 541.5 L300.54 539.5 L302.54 541.5 L304.54 539.5 L306.54 541.5 L308.54 539.5 L310.54 541.5 L312.54 539.5 L314.54 541.5 L316.54 539.5 L318.54 541.5 L320.54 539.5 L322.54 541.5 L324.54 539.5 L326.54 541.5 L328.54 539.5 L330.54 541.5 L332.54 539.5 L334.54 541.5 L336.54 539.5 L338.54 541.5 L340.54 539.5 L342.54 541.5 L344.54 539.5 L346.54 541.5 L348.54 539.5 L350.54 541.5 L352.54 539.5 L354.54 541.5 L356.54 539.5 L358.54 541.5 L360.54 539.5 M364.76 541.5 L366.76 539.5 L368.76 541.5 L370.76 539.5 L372.76 541.5 L374.76 539.5 L376.76 541.5 M381.98 541.5 L383.98 539.5 L385.98 541.5 L387.98 539.5 L389.98 541.5 L391.98 539.5 M397.17 541.5 L399.17 539.5 L401.17 541.5 L403.17 539.5 L405.17 541.5 L407.17 539.5 L409.17 541.5 L411.17 539.5 L413.17 541.5 L415.17 539.5 L417.17 541.5 L419.17 539.5 L421.17 541.5 L423.17 539.5 L425.17 541.5 L427.17 539.5 L429.17 541.5 L431.17 539.5 M436.49 541.5 L438.49 539.5 L440.49 541.5 L442.49 539.5 L444.49 541.5 L446.49 539.5 L448.49 541.5 L450.49 539.5 L452.49 541.5 L454.49 539.5 L456.49 541.5 L458.49 539.5 L460.49 541.5 L462.49 539.5 L464.49 541.5 L466.49 539.5 M475.16 541.5 L477.16 539.5 L479.16 541.5 L481.16 539.5 L483.16 541.5 L485.16 539.5 L487.16 541.5 L489.16 539.5 L491.16 541.5 L493.16 539.5 L495.16 541.5 L497.16 539.5 L499.16 541.5 L501.16 539.5 L503.16 541.5 L505.16 539.5 L507.16 541.5 L509.16 539.5 M514.50 541.5 L516.50 539.5 L518.50 541.5 L520.50 539.5 L522.50 541.5 L524.50 539.5 L526.50 541.5 L528.50 539.5 L530.50 541.5 L532.50 539.5 L534.50 541.5 L536.50 539.5 L538.50 541.5 L540.50 539.5 L542.50 541.5 L544.50 539.5 L546.50 541.5 L548.50 539.5 L550.50 541.5 L552.50 539.5 L554.50 541.5 L556.50 539.5 L558.50 541.5 L560.50 539.5 M565.89 541.5 L567.89 539.5 L569.89 541.5 L571.89 539.5 L573.89 541.5 L575.89 539.5 L577.89 541.5 L579.89 539.5 L581.89 541.5 L583.89 539.5 L585.89 541.5 L587.89 539.5 L589.89 541.5 L591.89 539.5 L593.89 541.5 L595.89 539.5 L597.89 541.5 L599.89 539.5 M605.23 541.5 L607.23 539.5 L609.23 541.5 L611.23 539.5 L613.23 541.5 L615.23 539.5 L617.23 541.5 L619.23 539.5 L621.23 541.5 L623.23 539.5 L625.23 541.5 L627.23 539.5 L629.23 541.5 L631.23 539.5 L633.23 541.5 L635.23 539.5 L637.23 541.5 L639.23 539.5 L641.23 541.5 L643.23 539.5 L645.23 541.5 L647.23 539.5 L649.23 541.5 L651.23 539.5 L653.23 541.5 L655.23 539.5 L657.23 541.5 L659.23 539.5 M663.31 541.5 L665.31 539.5 L667.31 541.5 L669.31 539.5 L671.31 541.5 L673.31 539.5 L675.31 541.5 L677.31 539.5 L679.31 541.5 L681.31 539.5 L683.31 541.5 L685.31 539.5 L687.31 541.5 M112.50 560.5 L114.50 558.5 L116.50 560.5 L118.50 558.5 L120.50 560.5 L122.50 558.5 L124.50 560.5 L126.50 558.5 L128.50 560.5 L130.50 558.5 L132.50 560.5 L134.50 558.5 L136.50 560.5 L138.50 558.5 L140.50 560.5 L142.50 558.5 L144.50 560.5 L146.50 558.5 L148.50 560.5 L150.50 558.5 L152.50 560.5 L154.50 558.5 M224.48 560.5 L226.48 558.5 L228.48 560.5 L230.48 558.5 L232.48 560.5 L234.48 558.5 L236.48 560.5 L238.48 558.5 L240.48 560.5 L242.48 558.5 L244.48 560.5 L246.48 558.5 L248.48 560.5 L250.48 558.5 L252.48 560.5 M261.82 560.5 L263.82 558.5 L265.82 560.5 L267.82 558.5 L269.82 560.5 L271.82 558.5 L273.82 560.5 L275.82 558.5 L277.82 560.5 L279.82 558.5 L281.82 560.5 L283.82 558.5 L285.82 560.5 L287.82 558.5 L289.82 560.5 L291.82 558.5 L293.82 560.5 L295.82 558.5 M301.85 560.5 L303.85 558.5 L305.85 560.5 L307.85 558.5 L309.85 560.5 L311.85 558.5 L313.85 560.5 L315.85 558.5 L317.85 560.5 L319.85 558.5 L321.85 560.5 L323.85 558.5 L325.85 560.5 L327.85 558.5 L329.85 560.5 L331.85 558.5 M338.53 560.5 L340.53 558.5 L342.53 560.5 L344.53 558.5 L346.53 560.5 L348.53 558.5 L350.53 560.5 L352.53 558.5 L354.53 560.5 L356.53 558.5 L358.53 560.5 L360.53 558.5 L362.53 560.5 L364.53 558.5 L366.53 560.5 L368.53 558.5 L370.53 560.5 L372.53 558.5 L374.53 560.5 L376.53 558.5 L378.53 560.5 L380.53 558.5 L382.53 560.5 L384.53 558.5 L386.53 560.5 L388.53 558.5 L390.53 560.5 L392.53 558.5 L394.53 560.5 L396.53 558.5 L398.53 560.5 L400.53 558.5 L402.53 560.5 M408.05 560.5 L410.05 558.5 L412.05 560.5 L414.05 558.5 L416.05 560.5 L418.05 558.5 L420.05 560.5 L422.05 558.5 L424.05 560.5 L426.05 558.5 L428.05 560.5 L430.05 558.5 L432.05 560.5 L434.05 558.5 L436.05 560.5 L438.05 558.5 L440.05 560.5 L442.05 558.5 M448.74 560.5 L450.74 558.5 L452.74 560.5 L454.74 558.5 L456.74 560.5 L458.74 558.5 L460.74 560.5 L462.74 558.5 L464.74 560.5 L466.74 558.5 L468.74 560.5 L470.74 558.5 L472.74 560.5 L474.74 558.5 M480.73 560.5 L482.73 558.5 L484.73 560.5 L486.73 558.5 L488.73 560.5 L490.73 558.5 L492.73 560.5 L494.73 558.5 L496.73 560.5 L498.73 558.5 L500.73 560.5 L502.73 558.5 L504.73 560.5 M544.00 560.5 L546.00 558.5 L548.00 560.5 L550.00 558.5 L552.00 560.5 L554.00 558.5 L556.00 560.5 L558.00 558.5 L560.00 560.5 L562.00 558.5 L564.00 560.5 L566.00 558.5 L568.00 560.5 L570.00 558.5 L572.00 560.5 L574.00 558.5 L576.00 560.5 L578.00 558.5 L580.00 560.5 L582.00 558.5 L584.00 560.5 L586.00 558.5 L588.00 560.5 M593.41 560.5 L595.41 558.5 L597.41 560.5 L599.41 558.5 L601.41 560.5 L603.41 558.5 L605.41 560.5 L607.41 558.5 L609.41 560.5 L611.41 558.5 L613.41 560.5 L615.41 558.5 L617.41 560.5 L619.41 558.5 L621.41 560.5 L623.41 558.5 L625.41 560.5 L627.41 558.5 L629.41 560.5 L631.41 558.5 L633.41 560.5 L635.41 558.5 L637.41 560.5 L639.41 558.5 L641.41 560.5 L643.41 558.5 L645.41 560.5 L647.41 558.5 L649.41 560.5 L651.41 558.5 L653.41 560.5 L655.41 558.5 M662.24 560.5 L664.24 558.5 L666.24 560.5 L668.24 558.5 L670.24 560.5 L672.24 558.5 L674.24 560.5 L676.24 558.5 L678.24 560.5 L680.24 558.5 L682.24 560.5 L684.24 558.5 L686.24 560.5 L688.24 558.5 L690.24 560.5 L692.24 558.5 L694.24 560.5 L696.24 558.5 L698.24 560.5 L700.24 558.5 L702.24 560.5 L704.24 558.5 L706.24 560.5 L708.24 558.5 L710.24 560.5 L712.24 558.5 L714.24 560.5 L716.24 558.5 M112.50 578.5 L114.50 576.5 L116.50 578.5 L118.50 576.5 L120.50 578.5 L122.50 576.5 L124.50 578.5 L126.50 576.5 L128.50 578.5 L130.50 576.5 L132.50 578.5 L134.50 576.5 L136.50 578.5 L138.50 576.5 L140.50 578.5 L142.50 576.5 L144.50 578.5 L146.50 576.5 L148.50 578.5 L150.50 576.5 L152.50 578.5 L154.50 576.5 L156.50 578.5 L158.50 576.5 L160.50 578.5 L162.50 576.5 L164.50 578.5 L166.50 576.5 L168.50 578.5 L170.50 576.5 M209.18 578.5 L211.18 576.5 L213.18 578.5 L215.18 576.5 L217.18 578.5 L219.18 576.5 L221.18 578.5 L223.18 576.5 L225.18 578.5 L227.18 576.5 L229.18 578.5 L231.18 576.5 L233.18 578.5 L235.18 576.5 L237.18 578.5 L239.18 576.5 L241.18 578.5 L243.18 576.5 L245.18 578.5 L247.18 576.5 L249.18 578.5 L251.18 576.5 L253.18 578.5 L255.18 576.5 M258.83 578.5 L260.83 576.5 L262.83 578.5 L264.83 576.5 L266.83 578.5 L268.83 576.5 L270.83 578.5 L272.83 576.5 L274.83 578.5 L276.83 576.5 L278.83 578.5 L280.83 576.5 L282.83 578.5 L284.83 576.5 L286.83 578.5 L288.83 576.5 M293.94 578.5 L295.94 576.5 L297.94 578.5 L299.94 576.5 L301.94 578.5 L303.94 576.5 L305.94 578.5 L307.94 576.5 L309.94 578.5 L311.94 576.5 L313.94 578.5 L315.94 576.5 L317.94 578.5 L319.94 576.5 L321.94 578.5 L323.94 576.5 L325.94 578.5 L327.94 576.5 L329.94 578.5 L331.94 576.5 L333.94 578.5 L335.94 576.5 L337.94 578.5 L339.94 576.5 L341.94 578.5 L343.94 576.5 M348.25 578.5 L350.25 576.5 L352.25 578.5 L354.25 576.5 L356.25 578.5 L358.25 576.5 L360.25 578.5 L362.25 576.5 L364.25 578.5 L366.25 576.5 L368.25 578.5 L370.25 576.5 L372.25 578.5 L374.25 576.5 L376.25 578.5 L378.25 576.5 L380.25 578.5 M384.01 578.5 L386.01 576.5 L388.01 578.5 L390.01 576.5 L392.01 578.5 L394.01 576.5 L396.01 578.5 L398.01 576.5 L400.01 578.5 L402.01 576.5 L404.01 578.5 L406.01 576.5 L408.01 578.5 L410.01 576.5 L412.01 578.5 L414.01 576.5 L416.01 578.5 L418.01 576.5 L420.01 578.5 L422.01 576.5 L424.01 578.5 L426.01 576.5 L428.01 578.5 L430.01 576.5 L432.01 578.5 L434.01 576.5 L436.01 578.5 L438.01 576.5 L440.01 578.5 L442.01 576.5 L444.01 578.5 L446.01 576.5 L448.01 578.5 L450.01 576.5 L452.01 578.5 L454.01 576.5 L456.01 578.5 L458.01 576.5 M461.50 578.5 L463.50 576.5 L465.50 578.5 L467.50 576.5 L469.50 578.5 L471.50 576.5 L473.50 578.5 L475.50 576.5 L477.50 578.5 L479.50 576.5 L481.50 578.5 L483.50 576.5 L485.50 578.5 L487.50 576.5 M492.63 578.5 L494.63 576.5 L496.63 578.5 L498.63 576.5 L500.63 578.5 L502.63 576.5 L504.63 578.5 L506.63 576.5 L508.63 578.5 L510.63 576.5 L512.63 578.5 L514.63 576.5 L516.63 578.5 L518.63 576.5 L520.63 578.5 L522.63 576.5 L524.63 578.5 L526.63 576.5 L528.63 578.5 L530.63 576.5 L532.63 578.5 L534.63 576.5 M586.01 578.5 L588.01 576.5 L590.01 578.5 L592.01 576.5 L594.01 578.5 L596.01 576.5 L598.01 578.5 L600.01 576.5 L602.01 578.5 L604.01 576.5 L606.01 578.5 L608.01 576.5 L610.01 578.5 L612.01 576.5 L614.01 578.5 L616.01 576.5 L618.01 578.5 L620.01 576.5 L622.01 578.5 L624.01 576.5 L626.01 578.5 L628.01 576.5 L630.01 578.5 L632.01 576.5 L634.01 578.5 L636.01 576.5 M643.64 578.5 L645.64 576.5 L647.64 578.5 L649.64 576.5 L651.64 578.5 L653.64 576.5 L655.64 578.5 L657.64 576.5 L659.64 578.5 L661.64 576.5 L663.64 578.5 L665.64 576.5 L667.64 578.5 L669.64 576.5 L671.64 578.5 L673.64 576.5 L675.64 578.5 L677.64 576.5 M681.40 578.5 L683.40 576.5 L685.40 578.5 L687.40 576.5 L689.40 578.5 L691.40 576.5 L693.40 578.5 L695.40 576.5 L697.40 578.5 L699.40 576.5 L701.40 578.5 L703.40 576.5 L705.40 578.5 L707.40 576.5 L709.40 578.5 L711.40 576.5 L713.40 578.5 L715.40 576.5 M112.50 598.5 L114.50 596.5 L116.50 598.5 L118.50 596.5 L120.50 598.5 L122.50 596.5 L124.50 598.5 L126.50 596.5 L128.50 598.5 L130.50 596.5 L132.50 598.5 L134.50 596.5 L136.50 598.5 M140.02 598.5 L142.02 596.5 L144.02 598.5 L146.02 596.5 L148.02 598.5 L150.02 596.5 L152.02 598.5 L154.02 596.5 L156.02 598.5 L158.02 596.5 L160.02 598.5 L162.02 596.5 L164.02 598.5 L166.02 596.5 L168.02 598.5 L170.02 596.5 L172.02 598.5 L174.02 596.5 L176.02 598.5 L178.02 596.5 L180.02 598.5 L182.02 596.5 L184.02 598.5 L186.02 596.5 M190.31 598.5 L192.31 596.5 L194.31 598.5 L196.31 596.5 L198.31 598.5 L200.31 596.5 L202.31 598.5 M207.09 598.5 L209.09 596.5 L211.09 598.5 L213.09 596.5 L215.09 598.5 L217.09 596.5 L219.09 598.5 L221.09 596.5 L223.09 598.5 L225.09 596.5 L227.09 598.5 L229.09 596.5 L231.09 598.5 L233.09 596.5 L235.09 598.5 L237.09 596.5 M240.61 598.5 L242.61 596.5 L244.61 598.5 L246.61 596.5 L248.61 598.5 L250.61 596.5 L252.61 598.5 L254.61 596.5 L256.61 598.5 L258.61 596.5 L260.61 598.5 L262.61 596.5 L264.61 598.5 L266.61 596.5 L268.61 598.5 L270.61 596.5 L272.61 598.5 L274.61 596.5 L276.61 598.5 M281.53 598.5 L283.53 596.5 L285.53 598.5 L287.53 596.5 L289.53 598.5 L291.53 596.5 L293.53 598.5 L295.53 596.5 L297.53 598.5 L299.53 596.5 L301.53 598.5 L303.53 596.5 L305.53 598.5 L307.53 596.5 L309.53 598.5 L311.53 596.5 L313.53 598.5 M317.06 598.5 L319.06 596.5 L321.06 598.5 L323.06 596.5 L325.06 598.5 L327.06 596.5 L329.06 598.5 L331.06 596.5 L333.06 598.5 L335.06 596.5 L337.06 598.5 L339.06 596.5 L341.06 598.5 L343.06 596.5 L345.06 598.5 M349.26 598.5 L351.26 596.5 L353.26 598.5 L355.26 596.5 L357.26 598.5 L359.26 596.5 L361.26 598.5 L363.26 596.5 L365.26 598.5 L367.26 596.5 L369.26 598.5 L371.26 596.5 L373.26 598.5 L375.26 596.5 L377.26 598.5 L379.26 596.5 L381.26 598.5 L383.26 596.5 L385.26 598.5 L387.26 596.5 L389.26 598.5 L391.26 596.5 L393.26 598.5 L395.26 596.5 L397.26 598.5 M419.68 598.5 L421.68 596.5 L423.68 598.5 L425.68 596.5 L427.68 598.5 L429.68 596.5 L431.68 598.5 L433.68 596.5 L435.68 598.5 L437.68 596.5 L439.68 598.5 L441.68 596.5 M445.17 598.5 L447.17 596.5 L449.17 598.5 L451.17 596.5 L453.17 598.5 L455.17 596.5 L457.17 598.5 L459.17 596.5 L461.17 598.5 L463.17 596.5 L465.17 598.5 L467.17 596.5 L469.17 598.5 L471.17 596.5 L473.17 598.5 L475.17 596.5 L477.17 598.5 L479.17 596.5 M483.41 598.5 L485.41 596.5 L487.41 598.5 L489.41 596.5 L491.41 598.5 L493.41 596.5 L495.41 598.5 L497.41 596.5 L499.41 598.5 L501.41 596.5 L503.41 598.5 L505.41 596.5 L507.41 598.5 L509.41 596.5 L511.41 598.5 L513.41 596.5 L515.41 598.5 L517.41 596.5 L519.41 598.5 M544.43 598.5 L546.43 596.5 L548.43 598.5 L550.43 596.5 L552.43 598.5 L554.43 596.5 L556.43 598.5 L558.43 596.5 L560.43 598.5 L562.43 596.5 L564.43 598.5 L566.43 596.5 L568.43 598.5 L570.43 596.5 L572.43 598.5 L574.43 596.5 L576.43 598.5 L578.43 596.5 L580.43 598.5 L582.43 596.5 L584.43 598.5 L586.43 596.5 L588.43 598.5 L590.43 596.5 L592.43 598.5 L594.43 596.5 L596.43 598.5 L598.43 596.5 L600.43 598.5 M112.50 651.5 L114.50 649.5 L116.50 651.5 L118.50 649.5 L120.50 651.5 L122.50 649.5 L124.50 651.5 L126.50 649.5 L128.50 651.5 L130.50 649.5 L132.50 651.5 L134.50 649.5 L136.50 651.5 L138.50 649.5 L140.50 651.5 L142.50 649.5 L144.50 651.5 L146.50 649.5 L148.50 651.5 L150.50 649.5 L152.50 651.5 L154.50 649.5 L156.50 651.5 L158.50 649.5 M162.63 651.5 L164.63 649.5 L166.63 651.5 L168.63 649.5 L170.63 651.5 L172.63 649.5 L174.63 651.5 L176.63 649.5 L178.63 651.5 L180.63 649.5 L182.63 651.5 L184.63 649.5 L186.63 651.5 L188.63 649.5 L190.63 651.5 L192.63 649.5 L194.63 651.5 L196.63 649.5 L198.63 651.5 L200.63 649.5 L202.63 651.5 L204.63 649.5 M208.48 651.5 L210.48 649.5 L212.48 651.5 L214.48 649.5 L216.48 651.5 L218.48 649.5 L220.48 651.5 L222.48 649.5 L224.48 651.5 L226.48 649.5 L228.48 651.5 L230.48 649.5 L232.48 651.5 L234.48 649.5 L236.48 651.5 L238.48 649.5 L240.48 651.5 L242.48 649.5 L244.48 651.5 L246.48 649.5 L248.48 651.5 L250.48 649.5 L252.48 651.5 L254.48 649.5 L256.48 651.5 M274.38 651.5 L276.38 649.5 L278.38 651.5 L280.38 649.5 L282.38 651.5 L284.38 649.5 L286.38 651.5 L288.38 649.5 L290.38 651.5 L292.38 649.5 L294.38 651.5 L296.38 649.5 L298.38 651.5 L300.38 649.5 L302.38 651.5 L304.38 649.5 L306.38 651.5 L308.38 649.5 L310.38 651.5 L312.38 649.5 L314.38 651.5 L316.38 649.5 L318.38 651.5 L320.38 649.5 L322.38 651.5 L324.38 649.5 M328.10 651.5 L330.10 649.5 L332.10 651.5 L334.10 649.5 L336.10 651.5 L338.10 649.5 L340.10 651.5 L342.10 649.5 L344.10 651.5 L346.10 649.5 L348.10 651.5 M352.46 651.5 L354.46 649.5 L356.46 651.5 L358.46 649.5 L360.46 651.5 L362.46 649.5 L364.46 651.5 L366.46 649.5 L368.46 651.5 M373.24 651.5 L375.24 649.5 L377.24 651.5 L379.24 649.5 L381.24 651.5 L383.24 649.5 L385.24 651.5 L387.24 649.5 L389.24 651.5 L391.24 649.5 L393.24 651.5 L395.24 649.5 L397.24 651.5 L399.24 649.5 L401.24 651.5 L403.24 649.5 L405.24 651.5 L407.24 649.5 M412.65 651.5 L414.65 649.5 L416.65 651.5 L418.65 649.5 L420.65 651.5 L422.65 649.5 L424.65 651.5 L426.65 649.5 L428.65 651.5 L430.65 649.5 L432.65 651.5 L434.65 649.5 L436.65 651.5 M505.77 651.5 L507.77 649.5 L509.77 651.5 L511.77 649.5 L513.77 651.5 L515.77 649.5 L517.77 651.5 L519.77 649.5 L521.77 651.5 L523.77 649.5 L525.77 651.5 L527.77 649.5 L529.77 651.5 L531.77 649.5 L533.77 651.5 L535.77 649.5 L537.77 651.5 L539.77 649.5 L541.77 651.5 L543.77 649.5 L545.77 651.5 L547.77 649.5 L549.77 651.5 L551.77 649.5 M621.08 651.5 L623.08 649.5 L625.08 651.5 L627.08 649.5 L629.08 651.5 L631.08 649.5 L633.08 651.5 L635.08 649.5 L637.08 651.5 L639.08 649.5 L641.08 651.5 L643.08 649.5 L645.08 651.5 L647.08 649.5 M652.60 651.5 L654.60 649.5 L656.60 651.5 L658.60 649.5 L660.60 651.5 L662.60 649.5 L664.60 651.5 L666.60 649.5 L668.60 651.5 L670.60 649.5 L672.60 651.5 L674.60 649.5 L676.60 651.5 L678.60 649.5 L680.60 651.5 L682.60 649.5 L684.60 651.5 L686.60 649.5 L688.60 651.5 L690.60 649.5 L692.60 651.5 L694.60 649.5 L696.60 651.5 L698.60 649.5 L700.60 651.5 L702.60 649.5 L704.60 651.5 L706.60 649.5 M112.50 670.5 L114.50 668.5 L116.50 670.5 L118.50 668.5 L120.50 670.5 L122.50 668.5 L124.50 670.5 L126.50 668.5 L128.50 670.5 L130.50 668.5 L132.50 670.5 L134.50 668.5 L136.50 670.5 L138.50 668.5 L140.50 670.5 L142.50 668.5 L144.50 670.5 L146.50 668.5 L148.50 670.5 L150.50 668.5 L152.50 670.5 L154.50 668.5 L156.50 670.5 M160.57 670.5 L162.57 668.5 L164.57 670.5 L166.57 668.5 L168.57 670.5 L170.57 668.5 L172.57 670.5 L174.57 668.5 L176.57 670.5 L178.57 668.5 L180.57 670.5 L182.57 668.5 L184.57 670.5 L186.57 668.5 L188.57 670.5 L190.57 668.5 L192.57 670.5 L194.57 668.5 L196.57 670.5 L198.57 668.5 L200.57 670.5 L202.57 668.5 L204.57 670.5 L206.57 668.5 L208.57 670.5 L210.57 668.5 M215.93 670.5 L217.93 668.5 L219.93 670.5 L221.93 668.5 L223.93 670.5 L225.93 668.5 L227.93 670.5 L229.93 668.5 L231.93 670.5 L233.93 668.5 L235.93 670.5 L237.93 668.5 L239.93 670.5 L241.93 668.5 L243.93 670.5 L245.93 668.5 L247.93 670.5 L249.93 668.5 L251.93 670.5 L253.93 668.5 L255.93 670.5 M260.35 670.5 L262.35 668.5 L264.35 670.5 L266.35 668.5 L268.35 670.5 L270.35 668.5 L272.35 670.5 L274.35 668.5 L276.35 670.5 L278.35 668.5 L280.35 670.5 L282.35 668.5 L284.35 670.5 L286.35 668.5 L288.35 670.5 L290.35 668.5 L292.35 670.5 L294.35 668.5 L296.35 670.5 L298.35 668.5 L300.35 670.5 M304.77 670.5 L306.77 668.5 L308.77 670.5 L310.77 668.5 L312.77 670.5 L314.77 668.5 L316.77 670.5 L318.77 668.5 L320.77 670.5 L322.77 668.5 L324.77 670.5 L326.77 668.5 L328.77 670.5 L330.77 668.5 L332.77 670.5 L334.77 668.5 L336.77 670.5 M344.85 670.5 L346.85 668.5 L348.85 670.5 L350.85 668.5 L352.85 670.5 L354.85 668.5 L356.85 670.5 L358.85 668.5 L360.85 670.5 L362.85 668.5 L364.85 670.5 L366.85 668.5 L368.85 670.5 L370.85 668.5 M419.13 670.5 L421.13 668.5 L423.13 670.5 L425.13 668.5 L427.13 670.5 L429.13 668.5 L431.13 670.5 L433.13 668.5 L435.13 670.5 L437.13 668.5 L439.13 670.5 L441.13 668.5 L443.13 670.5 L445.13 668.5 L447.13 670.5 L449.13 668.5 L451.13 670.5 L453.13 668.5 L455.13 670.5 L457.13 668.5 L459.13 670.5 M462.83 670.5 L464.83 668.5 L466.83 670.5 L468.83 668.5 L470.83 670.5 L472.83 668.5 L474.83 670.5 L476.83 668.5 L478.83 670.5 L480.83 668.5 L482.83 670.5 L484.83 668.5 L486.83 670.5 L488.83 668.5 L490.83 670.5 L492.83 668.5 L494.83 670.5 L496.83 668.5 L498.83 670.5 M503.61 670.5 L505.61 668.5 L507.61 670.5 L509.61 668.5 L511.61 670.5 L513.61 668.5 L515.61 670.5 L517.61 668.5 L519.61 670.5 L521.61 668.5 L523.61 670.5 L525.61 668.5 L527.61 670.5 L529.61 668.5 L531.61 670.5 L533.61 668.5 L535.61 670.5 L537.61 668.5 L539.61 670.5 L541.61 668.5 L543.61 670.5 M548.04 670.5 L550.04 668.5 L552.04 670.5 L554.04 668.5 L556.04 670.5 L558.04 668.5 L560.04 670.5 L562.04 668.5 L564.04 670.5 L566.04 668.5 L568.04 670.5 L570.04 668.5 L572.04 670.5 L574.04 668.5 L576.04 670.5 L578.04 668.5 L580.04 670.5 M584.45 670.5 L586.45 668.5 L588.45 670.5 L590.45 668.5 L592.45 670.5 L594.45 668.5 L596.45 670.5 L598.45 668.5 L600.45 670.5 L602.45 668.5 L604.45 670.5 L606.45 668.5 L608.45 670.5 L610.45 668.5 L612.45 670.5 L614.45 668.5 L616.45 670.5 L618.45 668.5 L620.45 670.5 L622.45 668.5 L624.45 670.5 L626.45 668.5 L628.45 670.5 L630.45 668.5 L632.45 670.5 L634.45 668.5 M638.34 670.5 L640.34 668.5 L642.34 670.5 L644.34 668.5 L646.34 670.5 L648.34 668.5 L650.34 670.5 L652.34 668.5 L654.34 670.5 L656.34 668.5 L658.34 670.5 L660.34 668.5 L662.34 670.5 M667.50 670.5 L669.50 668.5 L671.50 670.5 L673.50 668.5 L675.50 670.5 L677.50 668.5 L679.50 670.5 L681.50 668.5 L683.50 670.5 L685.50 668.5 L687.50 670.5 L689.50 668.5 L691.50 670.5 M112.50 688.5 L114.50 686.5 L116.50 688.5 L118.50 686.5 L120.50 688.5 L122.50 686.5 L124.50 688.5 L126.50 686.5 L128.50 688.5 L130.50 686.5 L132.50 688.5 L134.50 686.5 L136.50 688.5 L138.50 686.5 L140.50 688.5 L142.50 686.5 L144.50 688.5 L146.50 686.5 L148.50 688.5 M157.32 688.5 L159.32 686.5 L161.32 688.5 L163.32 686.5 L165.32 688.5 L167.32 686.5 L169.32 688.5 L171.32 686.5 L173.32 688.5 L175.32 686.5 L177.32 688.5 L179.32 686.5 L181.32 688.5 L183.32 686.5 L185.32 688.5 L187.32 686.5 L189.32 688.5 L191.32 686.5 L193.32 688.5 L195.32 686.5 L197.32 688.5 L199.32 686.5 L201.32 688.5 L203.32 686.5 L205.32 688.5 L207.32 686.5 L209.32 688.5 L211.32 686.5 L213.32 688.5 L215.32 686.5 L217.32 688.5 M222.76 688.5 L224.76 686.5 L226.76 688.5 L228.76 686.5 L230.76 688.5 L232.76 686.5 L234.76 688.5 L236.76 686.5 L238.76 688.5 L240.76 686.5 L242.76 688.5 L244.76 686.5 L246.76 688.5 L248.76 686.5 L250.76 688.5 L252.76 686.5 L254.76 688.5 L256.76 686.5 L258.76 688.5 L260.76 686.5 L262.76 688.5 L264.76 686.5 L266.76 688.5 L268.76 686.5 L270.76 688.5 L272.76 686.5 L274.76 688.5 L276.76 686.5 L278.76 688.5 L280.76 686.5 L282.76 688.5 M315.89 688.5 L317.89 686.5 L319.89 688.5 L321.89 686.5 L323.89 688.5 L325.89 686.5 L327.89 688.5 L329.89 686.5 L331.89 688.5 L333.89 686.5 L335.89 688.5 L337.89 686.5 L339.89 688.5 L341.89 686.5 L343.89 688.5 L345.89 686.5 L347.89 688.5 L349.89 686.5 L351.89 688.5 L353.89 686.5 M389.86 688.5 L391.86 686.5 L393.86 688.5 L395.86 686.5 L397.86 688.5 L399.86 686.5 L401.86 688.5 L403.86 686.5 L405.86 688.5 L407.86 686.5 L409.86 688.5 L411.86 686.5 L413.86 688.5 M431.82 688.5 L433.82 686.5 L435.82 688.5 L437.82 686.5 L439.82 688.5 L441.82 686.5 L443.82 688.5 L445.82 686.5 L447.82 688.5 L449.82 686.5 L451.82 688.5 L453.82 686.5 M492.27 688.5 L494.27 686.5 L496.27 688.5 L498.27 686.5 L500.27 688.5 L502.27 686.5 L504.27 688.5 L506.27 686.5 L508.27 688.5 L510.27 686.5 L512.27 688.5 L514.27 686.5 L516.27 688.5 L518.27 686.5 L520.27 688.5 L522.27 686.5 L524.27 688.5 L526.27 686.5 M530.68 688.5 L532.68 686.5 L534.68 688.5 L536.68 686.5 L538.68 688.5 L540.68 686.5 L542.68 688.5 L544.68 686.5 L546.68 688.5 L548.68 686.5 L550.68 688.5 L552.68 686.5 L554.68 688.5 L556.68 686.5 L558.68 688.5 L560.68 686.5 L562.68 688.5 L564.68 686.5 L566.68 688.5 L568.68 686.5 L570.68 688.5 L572.68 686.5 L574.68 688.5 L576.68 686.5 L578.68 688.5 L580.68 686.5 L582.68 688.5 L584.68 686.5 M593.28 688.5 L595.28 686.5 L597.28 688.5 L599.28 686.5 L601.28 688.5 L603.28 686.5 L605.28 688.5 L607.28 686.5 L609.28 688.5 L611.28 686.5 L613.28 688.5 L615.28 686.5 L617.28 688.5 L619.28 686.5 L621.28 688.5 L623.28 686.5 L625.28 688.5 L627.28 686.5 L629.28 688.5 L631.28 686.5 L633.28 688.5 L635.28 686.5 L637.28 688.5 L639.28 686.5 L641.28 688.5 L643.28 686.5 L645.28 688.5 M112.50 707.5 L114.50 705.5 L116.50 707.5 L118.50 705.5 L120.50 707.5 L122.50 705.5 L124.50 707.5 L126.50 705.5 L128.50 707.5 L130.50 705.5 L132.50 707.5 L134.50 705.5 L136.50 707.5 L138.50 705.5 L140.50 707.5 L142.50 705.5 L144.50 707.5 L146.50 705.5 L148.50 707.5 L150.50 705.5 L152.50 707.5 L154.50 705.5 L156.50 707.5 L158.50 705.5 L160.50 707.5 L162.50 705.5 L164.50 707.5 L166.50 705.5 L168.50 707.5 L170.50 705.5 L172.50 707.5 L174.50 705.5 L176.50 707.5 L178.50 705.5 L180.50 707.5 L182.50 705.5 L184.50 707.5 L186.50 705.5 L188.50 707.5 M193.52 707.5 L195.52 705.5 L197.52 707.5 L199.52 705.5 L201.52 707.5 L203.52 705.5 L205.52 707.5 L207.52 705.5 L209.52 707.5 L211.52 705.5 L213.52 707.5 L215.52 705.5 L217.52 707.5 L219.52 705.5 L221.52 707.5 M225.79 707.5 L227.79 705.5 L229.79 707.5 L231.79 705.5 L233.79 707.5 L235.79 705.5 L237.79 707.5 L239.79 705.5 L241.79 707.5 L243.79 705.5 M248.74 707.5 L250.74 705.5 L252.74 707.5 L254.74 705.5 L256.74 707.5 L258.74 705.5 L260.74 707.5 L262.74 705.5 L264.74 707.5 L266.74 705.5 L268.74 707.5 L270.74 705.5 L272.74 707.5 L274.74 705.5 L276.74 707.5 M281.02 707.5 L283.02 705.5 L285.02 707.5 L287.02 705.5 L289.02 707.5 L291.02 705.5 L293.02 707.5 L295.02 705.5 L297.02 707.5 L299.02 705.5 L301.02 707.5 L303.02 705.5 L305.02 707.5 L307.02 705.5 L309.02 707.5 L311.02 705.5 L313.02 707.5 L315.02 705.5 L317.02 707.5 L319.02 705.5 L321.02 707.5 L323.02 705.5 L325.02 707.5 L327.02 705.5 L329.02 707.5 M334.08 707.5 L336.08 705.5 L338.08 707.5 L340.08 705.5 L342.08 707.5 L344.08 705.5 L346.08 707.5 L348.08 705.5 L350.08 707.5 L352.08 705.5 L354.08 707.5 L356.08 705.5 L358.08 707.5 L360.08 705.5 L362.08 707.5 L364.08 705.5 L366.08 707.5 L368.08 705.5 M372.82 707.5 L374.82 705.5 L376.82 707.5 L378.82 705.5 L380.82 707.5 L382.82 705.5 L384.82 707.5 L386.82 705.5 L388.82 707.5 L390.82 705.5 L392.82 707.5 L394.82 705.5 L396.82 707.5 L398.82 705.5 L400.82 707.5 L402.82 705.5 M407.95 707.5 L409.95 705.5 L411.95 707.5 L413.95 705.5 L415.95 707.5 L417.95 705.5 L419.95 707.5 L421.95 705.5 L423.95 707.5 L425.95 705.5 L427.95 707.5 L429.95 705.5 L431.95 707.5 L433.95 705.5 L435.95 707.5 L437.95 705.5 L439.95 707.5 L441.95 705.5 L443.95 707.5 L445.95 705.5 L447.95 707.5" fill="none" stroke="#cc2c3a" stroke-width="1.15"/></svg>
</body></html>
